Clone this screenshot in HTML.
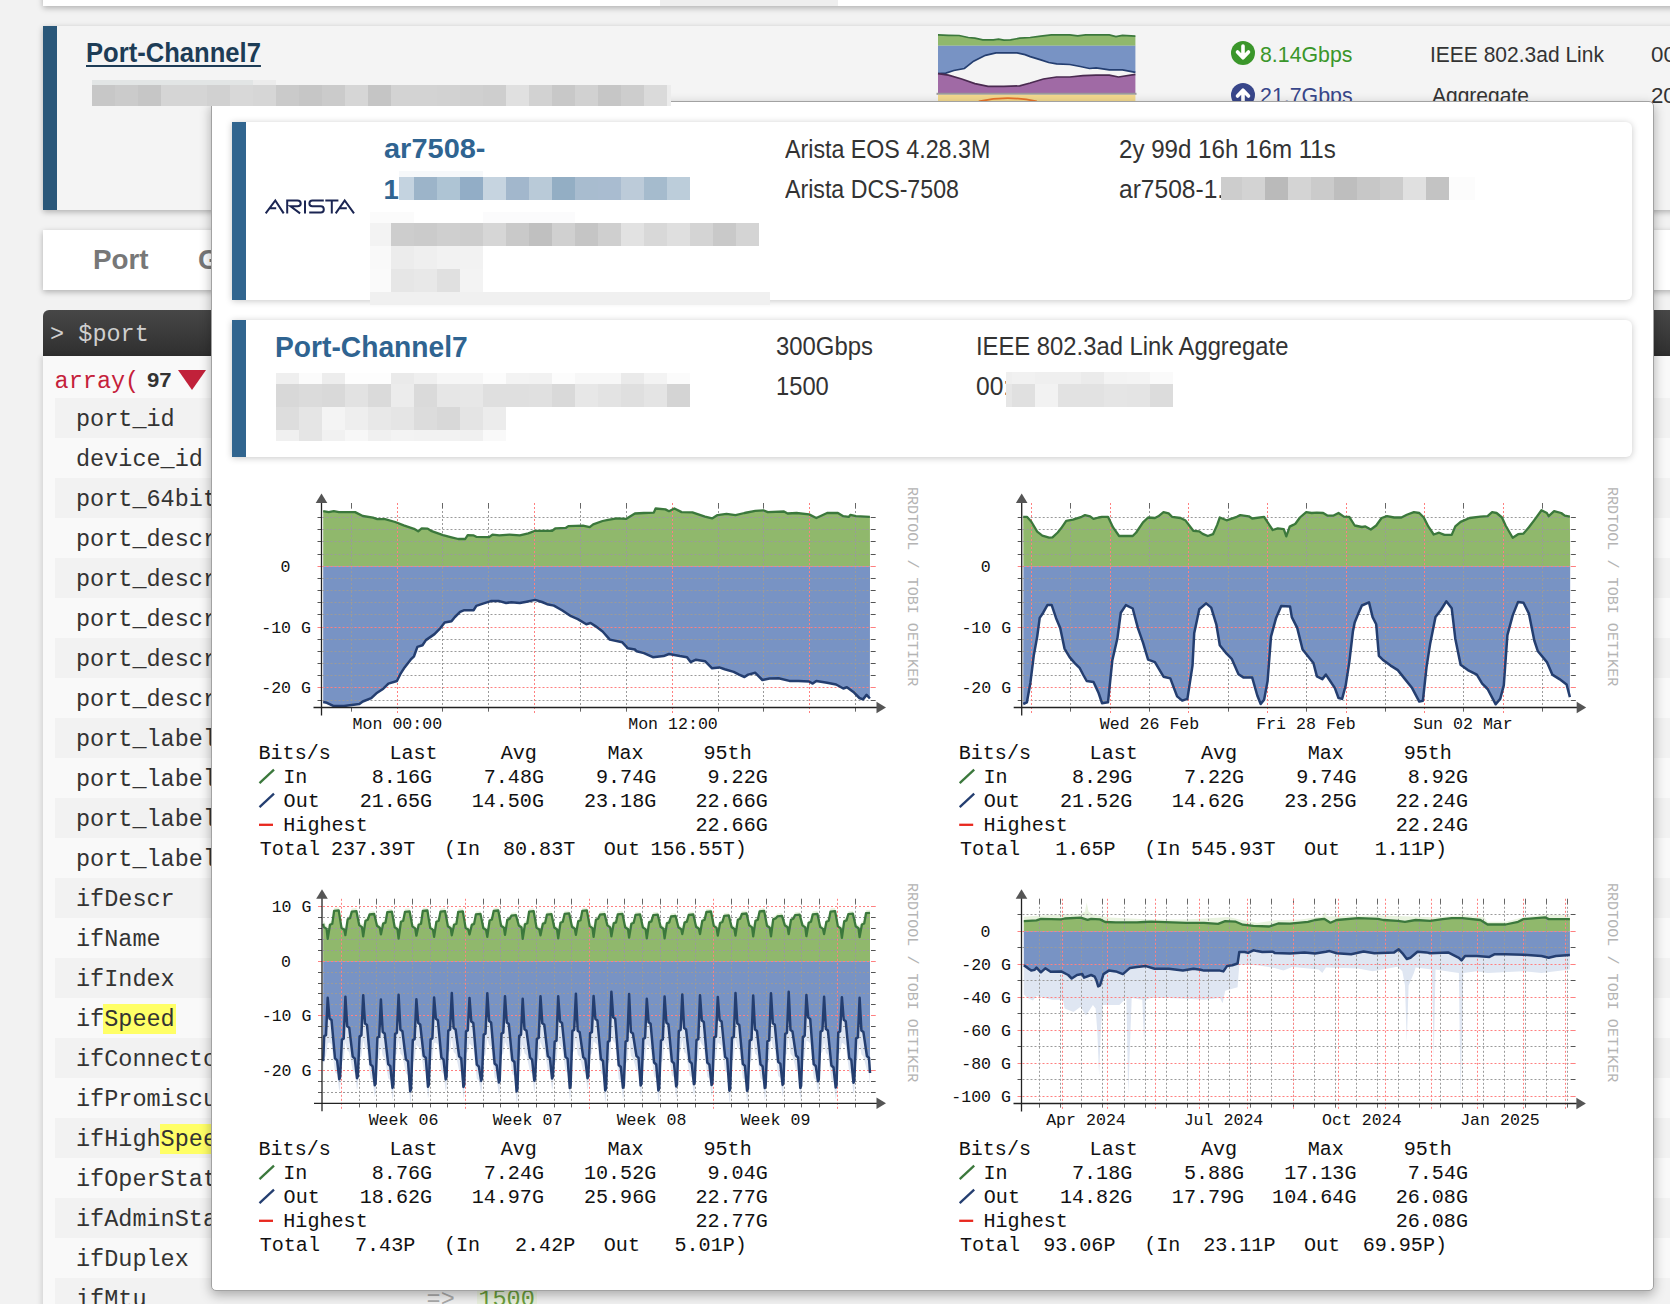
<!DOCTYPE html><html><head><meta charset="utf-8"><style>
html,body{margin:0;padding:0;background:#f2f2f2;}
body{width:1670px;height:1304px;overflow:hidden;position:relative;background:#f2f2f2;font-family:"Liberation Sans",sans-serif;}
.t{position:absolute;white-space:pre;line-height:1;}
.r{position:absolute;}
svg{position:absolute;overflow:visible;}
</style></head><body><div class="r" style="left:43px;top:-20px;width:1700px;height:26px;background:#fff;box-shadow:0 2px 6px rgba(0,0,0,.28);"></div>
<div class="r" style="left:660.0px;top:0.0px;width:178.0px;height:6.0px;background:#eeeeee;"></div>
<div class="r" style="left:43px;top:26px;width:1700px;height:184px;background:#f4f4f4;box-shadow:0 2px 6px rgba(0,0,0,.28);"></div>
<div class="r" style="left:43.0px;top:26.0px;width:14.0px;height:184.0px;background:#2a5779;"></div>
<div class="t" style="left:86.2px;top:40.0px;font-size:27px;font-family:'Liberation Sans', sans-serif;font-weight:bold;color:#1d3c56;transform:scaleX(0.9480);transform-origin:0 0;text-decoration:underline;text-underline-offset:3px;text-decoration-thickness:2px;">Port-Channel7</div>
<svg style="left:938px;top:33px" width="198" height="68" viewBox="0 0 198 68">
<path d="M0 12.8 L0.0 1.9 L10.5 2.3 L21.1 2.5 L30.3 4.5 L36.9 5.2 L44.8 6.8 L55.3 6.8 L60.6 6.2 L65.9 7.2 L72.5 6.8 L81.7 5.2 L92.2 4.5 L102.8 3.2 L113.3 1.9 L131.8 1.9 L139.7 2.8 L147.6 1.9 L171.3 1.9 L177.9 3.6 L184.5 2.3 L197.4 3.2 L197.4 12.8Z" fill="#90b86c"/>
<path d="M0.0 1.9 L10.5 2.3 L21.1 2.5 L30.3 4.5 L36.9 5.2 L44.8 6.8 L55.3 6.8 L60.6 6.2 L65.9 7.2 L72.5 6.8 L81.7 5.2 L92.2 4.5 L102.8 3.2 L113.3 1.9 L131.8 1.9 L139.7 2.8 L147.6 1.9 L171.3 1.9 L177.9 3.6 L184.5 2.3 L197.4 3.2" fill="none" stroke="#3b783c" stroke-width="1.7"/>
<path d="M0 12.8 L0.0 40.7 L7.9 40.1 L15.8 37.5 L26.4 35.5 L35.6 28.2 L47.4 22.3 L58.0 19.9 L79.1 19.9 L87.0 21.6 L92.2 23.6 L102.8 26.9 L110.7 29.5 L118.6 30.9 L131.8 31.5 L142.3 33.5 L151.5 35.5 L158.1 34.8 L171.3 36.8 L184.5 36.8 L197.4 39.4 L197.4 12.8Z" fill="#7893c4"/>
<path d="M0.0 40.7 L7.9 40.1 L15.8 37.5 L26.4 35.5 L35.6 28.2 L47.4 22.3 L58.0 19.9 L79.1 19.9 L87.0 21.6 L92.2 23.6 L102.8 26.9 L110.7 29.5 L118.6 30.9 L131.8 31.5 L142.3 33.5 L151.5 35.5 L158.1 34.8 L171.3 36.8 L184.5 36.8 L197.4 39.4" fill="none" stroke="#243e70" stroke-width="1.7"/>
<path d="M0 60.5 L0.0 40.7 L10.5 42.1 L23.7 46.0 L36.9 50.6 L50.1 53.3 L65.9 53.3 L81.7 52.9 L92.2 50.0 L105.4 46.0 L118.6 44.0 L131.8 44.0 L144.9 42.7 L158.1 42.1 L171.3 42.1 L180.5 44.0 L197.4 41.4 L197.4 60.5Z" fill="#a06aa5"/>
<path d="M0.0 40.7 L10.5 42.1 L23.7 46.0 L36.9 50.6 L50.1 53.3 L65.9 53.3 L81.7 52.9 L92.2 50.0 L105.4 46.0 L118.6 44.0 L131.8 44.0 L144.9 42.7 L158.1 42.1 L171.3 42.1 L180.5 44.0 L197.4 41.4" fill="none" stroke="#4a2a50" stroke-width="1.7"/>
<rect x="-1.5" y="59.8" width="200" height="2" fill="#9a9a9a"/>
<rect x="0" y="61.8" width="197.4" height="7" fill="#f3d98e"/>
<path d="M40.8 68.4 Q69.8 62 98.8 68.4" fill="none" stroke="#e8742a" stroke-width="1.8"/>
</svg>
<svg style="left:1231px;top:41px" width="24" height="24" viewBox="0 0 24 24"><circle cx="12" cy="12" r="12" fill="#3a962a"/><path d="M12 5 V16 M6.5 11 L12 16.8 L17.5 11" fill="none" stroke="#fff" stroke-width="3.6" stroke-linecap="round" stroke-linejoin="round"/></svg>
<div class="t" style="left:1260.1px;top:43.9px;font-size:22px;font-family:'Liberation Sans', sans-serif;font-weight:normal;color:#3a962a;transform:scaleX(0.9687);transform-origin:0 0;">8.14Gbps</div>
<svg style="left:1231px;top:83px" width="24" height="24" viewBox="0 0 24 24"><circle cx="12" cy="12" r="12" fill="#38468a"/><path d="M12 19 V8 M6.5 13 L12 7.2 L17.5 13" fill="none" stroke="#fff" stroke-width="3.6" stroke-linecap="round" stroke-linejoin="round"/></svg>
<div class="t" style="left:1259.9px;top:84.9px;font-size:22px;font-family:'Liberation Sans', sans-serif;font-weight:normal;color:#38468a;transform:scaleX(0.9710);transform-origin:0 0;">21.7Gbps</div>
<div class="t" style="left:1430.1px;top:43.6px;font-size:22.3px;font-family:'Liberation Sans', sans-serif;font-weight:normal;color:#333;transform:scaleX(0.9418);transform-origin:0 0;">IEEE 802.3ad Link</div>
<div class="t" style="left:1432.0px;top:84.6px;font-size:22.3px;font-family:'Liberation Sans', sans-serif;font-weight:normal;color:#333;transform:scaleX(0.9420);transform-origin:0 0;">Aggregate</div>
<div class="t" style="left:1651.1px;top:43.6px;font-size:22.3px;font-family:'Liberation Sans', sans-serif;font-weight:normal;color:#333;">00</div>
<div class="t" style="left:1650.9px;top:85.1px;font-size:22.3px;font-family:'Liberation Sans', sans-serif;font-weight:normal;color:#333;">20</div>
<div class="r" style="left:43px;top:230px;width:1700px;height:60px;background:#fff;box-shadow:0 2px 6px rgba(0,0,0,.28);"></div>
<div class="t" style="left:92.5px;top:244.8px;font-size:28.5px;font-family:'Liberation Sans', sans-serif;font-weight:bold;color:#777;transform:scaleX(0.9759);transform-origin:0 0;">Port</div>
<div class="t" style="left:198.4px;top:244.8px;font-size:28.5px;font-family:'Liberation Sans', sans-serif;font-weight:bold;color:#777;transform:scaleX(0.9747);transform-origin:0 0;">Graphs</div>
<div class="r" style="left:43px;top:310px;width:1700px;height:46px;background:linear-gradient(#474747,#2f2f2f);border-top-left-radius:6px;"></div>
<div class="t" style="left:50.1px;top:322.7px;font-size:23.5px;font-family:'Liberation Mono', monospace;font-weight:normal;color:#cfcfcf;">&gt; $port</div>
<div class="r" style="left:43px;top:356px;width:1700px;height:1000px;background:#f9f9f9;box-shadow:-2px 0 5px rgba(0,0,0,.12);"></div>
<div class="t" style="left:54.6px;top:369.5px;font-size:23.5px;font-family:'Liberation Mono', monospace;font-weight:normal;color:#c5213a;">array(</div>
<div class="t" style="left:147.3px;top:370.0px;font-size:20.5px;font-family:'Liberation Sans', sans-serif;font-weight:bold;color:#333;transform:scaleX(1.0788);transform-origin:0 0;">97</div>
<svg style="left:178px;top:370px" width="28" height="20"><path d="M0 0H28L14 20Z" fill="#c1213a"/></svg>
<div class="r" style="left:55.0px;top:398.0px;width:1645.0px;height:40.0px;background:#f2f2f2;"></div>
<div class="t" style="left:76px;top:407.9px;font-size:23.5px;font-family:'Liberation Mono',monospace;color:#333">port_id</div>
<div class="r" style="left:55.0px;top:438.0px;width:1645.0px;height:40.0px;background:#f9f9f9;"></div>
<div class="t" style="left:76px;top:447.9px;font-size:23.5px;font-family:'Liberation Mono',monospace;color:#333">device_id</div>
<div class="r" style="left:55.0px;top:478.0px;width:1645.0px;height:40.0px;background:#f2f2f2;"></div>
<div class="t" style="left:76px;top:487.9px;font-size:23.5px;font-family:'Liberation Mono',monospace;color:#333">port_64bit</div>
<div class="r" style="left:55.0px;top:518.0px;width:1645.0px;height:40.0px;background:#f9f9f9;"></div>
<div class="t" style="left:76px;top:527.9px;font-size:23.5px;font-family:'Liberation Mono',monospace;color:#333">port_descr_type</div>
<div class="r" style="left:55.0px;top:558.0px;width:1645.0px;height:40.0px;background:#f2f2f2;"></div>
<div class="t" style="left:76px;top:567.9px;font-size:23.5px;font-family:'Liberation Mono',monospace;color:#333">port_descr_descr</div>
<div class="r" style="left:55.0px;top:598.0px;width:1645.0px;height:40.0px;background:#f9f9f9;"></div>
<div class="t" style="left:76px;top:607.9px;font-size:23.5px;font-family:'Liberation Mono',monospace;color:#333">port_descr_circuit</div>
<div class="r" style="left:55.0px;top:638.0px;width:1645.0px;height:40.0px;background:#f2f2f2;"></div>
<div class="t" style="left:76px;top:647.9px;font-size:23.5px;font-family:'Liberation Mono',monospace;color:#333">port_descr_speed</div>
<div class="r" style="left:55.0px;top:678.0px;width:1645.0px;height:40.0px;background:#f9f9f9;"></div>
<div class="t" style="left:76px;top:687.9px;font-size:23.5px;font-family:'Liberation Mono',monospace;color:#333">port_descr_notes</div>
<div class="r" style="left:55.0px;top:718.0px;width:1645.0px;height:40.0px;background:#f2f2f2;"></div>
<div class="t" style="left:76px;top:727.9px;font-size:23.5px;font-family:'Liberation Mono',monospace;color:#333">port_label</div>
<div class="r" style="left:55.0px;top:758.0px;width:1645.0px;height:40.0px;background:#f9f9f9;"></div>
<div class="t" style="left:76px;top:767.9px;font-size:23.5px;font-family:'Liberation Mono',monospace;color:#333">port_label_base</div>
<div class="r" style="left:55.0px;top:798.0px;width:1645.0px;height:40.0px;background:#f2f2f2;"></div>
<div class="t" style="left:76px;top:807.9px;font-size:23.5px;font-family:'Liberation Mono',monospace;color:#333">port_label_num</div>
<div class="r" style="left:55.0px;top:838.0px;width:1645.0px;height:40.0px;background:#f9f9f9;"></div>
<div class="t" style="left:76px;top:847.9px;font-size:23.5px;font-family:'Liberation Mono',monospace;color:#333">port_label_short</div>
<div class="r" style="left:55.0px;top:878.0px;width:1645.0px;height:40.0px;background:#f2f2f2;"></div>
<div class="t" style="left:76px;top:887.9px;font-size:23.5px;font-family:'Liberation Mono',monospace;color:#333">ifDescr</div>
<div class="r" style="left:55.0px;top:918.0px;width:1645.0px;height:40.0px;background:#f9f9f9;"></div>
<div class="t" style="left:76px;top:927.9px;font-size:23.5px;font-family:'Liberation Mono',monospace;color:#333">ifName</div>
<div class="r" style="left:55.0px;top:958.0px;width:1645.0px;height:40.0px;background:#f2f2f2;"></div>
<div class="t" style="left:76px;top:967.9px;font-size:23.5px;font-family:'Liberation Mono',monospace;color:#333">ifIndex</div>
<div class="r" style="left:55.0px;top:998.0px;width:1645.0px;height:40.0px;background:#f9f9f9;"></div>
<div class="r" style="left:103.2px;top:1004.0px;width:72.5px;height:30.0px;background:#ffff66;"></div>
<div class="t" style="left:76px;top:1007.9px;font-size:23.5px;font-family:'Liberation Mono',monospace;color:#333">ifSpeed</div>
<div class="r" style="left:55.0px;top:1038.0px;width:1645.0px;height:40.0px;background:#f2f2f2;"></div>
<div class="t" style="left:76px;top:1047.9px;font-size:23.5px;font-family:'Liberation Mono',monospace;color:#333">ifConnectorPresent</div>
<div class="r" style="left:55.0px;top:1078.0px;width:1645.0px;height:40.0px;background:#f9f9f9;"></div>
<div class="t" style="left:76px;top:1087.9px;font-size:23.5px;font-family:'Liberation Mono',monospace;color:#333">ifPromiscuousMode</div>
<div class="r" style="left:55.0px;top:1118.0px;width:1645.0px;height:40.0px;background:#f2f2f2;"></div>
<div class="r" style="left:159.6px;top:1124.0px;width:72.5px;height:30.0px;background:#ffff66;"></div>
<div class="t" style="left:76px;top:1127.9px;font-size:23.5px;font-family:'Liberation Mono',monospace;color:#333">ifHighSpeed</div>
<div class="r" style="left:55.0px;top:1158.0px;width:1645.0px;height:40.0px;background:#f9f9f9;"></div>
<div class="t" style="left:76px;top:1167.9px;font-size:23.5px;font-family:'Liberation Mono',monospace;color:#333">ifOperStatus</div>
<div class="r" style="left:55.0px;top:1198.0px;width:1645.0px;height:40.0px;background:#f2f2f2;"></div>
<div class="t" style="left:76px;top:1207.9px;font-size:23.5px;font-family:'Liberation Mono',monospace;color:#333">ifAdminStatus</div>
<div class="r" style="left:55.0px;top:1238.0px;width:1645.0px;height:40.0px;background:#f9f9f9;"></div>
<div class="t" style="left:76px;top:1247.9px;font-size:23.5px;font-family:'Liberation Mono',monospace;color:#333">ifDuplex</div>
<div class="r" style="left:55.0px;top:1278.0px;width:1645.0px;height:40.0px;background:#f2f2f2;"></div>
<div class="t" style="left:76px;top:1287.9px;font-size:23.5px;font-family:'Liberation Mono',monospace;color:#333">ifMtu</div>
<div class="t" style="left:426.6px;top:1288.1px;font-size:23.5px;font-family:'Liberation Mono', monospace;font-weight:normal;color:#aaa;">=&gt;</div>
<div class="r" style="left:477.0px;top:1283.0px;width:60.0px;height:21.0px;background:#e9f0de;"></div>
<div class="t" style="left:478.4px;top:1288.1px;font-size:23.5px;font-family:'Liberation Mono', monospace;font-weight:normal;color:#6a9e3c;">1500</div>
<div class="r" style="left:211px;top:101px;width:1441px;height:1188px;background:#fff;border:1px solid #a2a2a2;border-radius:5px;box-shadow:0 4px 12px rgba(0,0,0,.3);"></div>
<div class="r" style="left:232px;top:122px;width:1400px;height:178px;background:#fff;border-radius:0 6px 6px 0;box-shadow:0 1px 7px rgba(0,0,0,.22);"></div>
<div class="r" style="left:232.0px;top:122.0px;width:14.0px;height:178.0px;background:#31658f;"></div>
<svg style="left:260px;top:190px" width="100" height="30" viewBox="0 0 100 30"><g fill="none" stroke="#1b2552" stroke-width="2" stroke-linejoin="miter">
<path d="M5.7 23.4 L15.3 10.4 L23.7 23.4 M9.9 18.2 H16.2"/>
<path d="M27.2 23.4 V10.6 H37.5 Q40.7 10.6 40.7 13.4 Q40.7 16.2 37.5 16.2 H30.5 L40.1 23.4"/>
<path d="M45 10.4 V23.4"/>
<path d="M63.8 10.6 H52.4 Q49.4 10.6 49.4 13.4 Q49.4 16.2 52.4 16.2 H60.8 Q63.8 16.2 63.8 19.6 Q63.8 22.6 60.8 22.6 H49.2"/>
<path d="M65.3 10.6 H78.4 M71.8 10.6 V23.4"/>
<path d="M75.7 23.4 L84.7 10.4 L94 23.4 M79.6 18.2 H86.8"/>
</g></svg>
<div class="t" style="left:383.7px;top:135.4px;font-size:27.5px;font-family:'Liberation Sans', sans-serif;font-weight:bold;color:#2f6491;transform:scaleX(1.0538);transform-origin:0 0;">ar7508-</div>
<div class="t" style="left:383.4px;top:175.9px;font-size:27.5px;font-family:'Liberation Sans', sans-serif;font-weight:bold;color:#2f6491;">1</div>
<div class="t" style="left:784.7px;top:136.9px;font-size:25.4px;font-family:'Liberation Sans', sans-serif;font-weight:normal;color:#333;transform:scaleX(0.9147);transform-origin:0 0;">Arista EOS 4.28.3M</div>
<div class="t" style="left:784.7px;top:176.7px;font-size:25.4px;font-family:'Liberation Sans', sans-serif;font-weight:normal;color:#333;transform:scaleX(0.9130);transform-origin:0 0;">Arista DCS-7508</div>
<div class="t" style="left:1118.8px;top:136.9px;font-size:25.4px;font-family:'Liberation Sans', sans-serif;font-weight:normal;color:#333;transform:scaleX(0.9500);transform-origin:0 0;">2y 99d 16h 16m 11s</div>
<div class="t" style="left:1119.0px;top:176.7px;font-size:25.4px;font-family:'Liberation Sans', sans-serif;font-weight:normal;color:#333;transform:scaleX(0.9677);transform-origin:0 0;">ar7508-1.</div>
<div class="r" style="left:232px;top:320px;width:1400px;height:137px;background:#fff;border-radius:0 6px 6px 0;box-shadow:0 1px 7px rgba(0,0,0,.22);"></div>
<div class="r" style="left:232.0px;top:320.0px;width:14.0px;height:137.0px;background:#31658f;"></div>
<div class="t" style="left:274.5px;top:331.5px;font-size:30px;font-family:'Liberation Sans', sans-serif;font-weight:bold;color:#2f6491;transform:scaleX(0.9400);transform-origin:0 0;">Port-Channel7</div>
<div class="t" style="left:775.9px;top:334.2px;font-size:25.5px;font-family:'Liberation Sans', sans-serif;font-weight:normal;color:#333;transform:scaleX(0.9367);transform-origin:0 0;">300Gbps</div>
<div class="t" style="left:775.9px;top:374.1px;font-size:25.5px;font-family:'Liberation Sans', sans-serif;font-weight:normal;color:#333;transform:scaleX(0.9304);transform-origin:0 0;">1500</div>
<div class="t" style="left:975.9px;top:334.2px;font-size:25.5px;font-family:'Liberation Sans', sans-serif;font-weight:normal;color:#333;transform:scaleX(0.9336);transform-origin:0 0;">IEEE 802.3ad Link Aggregate</div>
<div class="t" style="left:976.0px;top:374.1px;font-size:25.5px;font-family:'Liberation Sans', sans-serif;font-weight:normal;color:#333;transform:scaleX(0.9648);transform-origin:0 0;">00:</div>
<svg style="left:0;top:0" width="1670" height="1304" viewBox="0 0 1670 1304"><style>.ax{font-family:"Liberation Mono",monospace;font-size:16.6px;fill:#111}.lg{font-family:"Liberation Mono",monospace;font-size:20.1px;fill:#111;white-space:pre}.wm{font-family:"Liberation Mono",monospace;font-size:15.1px;fill:#b4b4b4}</style><path d="M323.2 566.3 L323.2 511.2 L328.7 512.1 L333.8 511.2 L338.9 512.1 L355.1 512.1 L362.8 516.0 L373.0 517.7 L377.3 519.2 L385.0 519.2 L395.2 522.0 L403.7 525.4 L414.0 528.8 L418.2 531.3 L421.7 528.3 L427.6 528.6 L431.0 530.8 L443.0 535.1 L451.5 537.3 L458.3 539.0 L465.2 539.0 L467.7 535.1 L473.7 535.4 L476.3 536.8 L489.1 537.2 L492.5 534.6 L499.3 535.4 L509.5 534.6 L519.8 535.4 L528.3 533.4 L535.1 530.8 L552.2 530.8 L555.6 528.3 L565.9 527.8 L568.4 526.1 L582.9 525.7 L589.7 527.1 L593.2 524.4 L602.6 521.0 L608.0 519.8 L616.9 518.4 L625.9 518.9 L634.9 513.5 L643.9 513.0 L653.8 512.6 L655.6 508.5 L665.4 509.4 L669.0 511.2 L674.4 508.5 L681.6 512.1 L692.4 512.4 L705.0 516.6 L712.1 518.4 L717.5 515.1 L726.5 513.9 L735.5 515.1 L744.5 513.0 L755.3 510.8 L763.3 510.3 L767.8 512.1 L784.0 511.5 L787.6 513.5 L796.6 513.0 L809.1 514.4 L816.3 518.0 L827.1 513.0 L837.9 513.0 L843.3 516.2 L848.7 516.9 L850.5 514.8 L855.9 516.2 L869.9 516.9 L870.0 566.3Z" fill="#90b86c"/>
<path d="M323.2 566.3 L323.2 702.0 L326.9 702.8 L333.8 706.1 L344.0 706.1 L359.4 704.0 L362.8 701.5 L371.3 698.1 L376.4 693.3 L383.3 688.7 L388.4 683.6 L396.9 681.0 L400.3 674.2 L404.6 667.4 L410.6 659.7 L414.0 656.3 L417.4 646.9 L422.5 645.2 L425.9 640.1 L434.5 634.1 L440.4 628.1 L444.7 622.6 L451.5 621.3 L454.9 617.0 L460.1 611.9 L464.3 610.2 L473.7 610.2 L476.3 605.9 L482.2 603.9 L490.8 601.1 L499.3 601.1 L506.1 603.0 L511.2 602.2 L519.8 603.0 L526.6 601.7 L535.1 599.9 L542.0 602.0 L547.1 604.2 L553.9 605.6 L562.4 610.5 L571.0 616.2 L577.8 619.1 L586.3 624.2 L590.6 623.0 L595.4 626.1 L602.6 631.5 L609.8 639.6 L622.3 642.3 L627.7 648.2 L634.9 649.5 L636.7 651.3 L643.9 653.1 L652.9 657.2 L663.6 656.1 L669.0 654.0 L679.8 656.1 L687.0 657.2 L690.6 662.1 L696.0 659.7 L705.0 661.2 L712.1 668.3 L719.3 667.4 L724.7 669.2 L733.7 671.9 L739.1 674.6 L744.5 677.0 L748.1 674.6 L755.3 672.8 L762.4 680.0 L769.6 678.6 L778.6 678.2 L789.4 680.9 L798.4 680.9 L809.1 681.5 L812.7 683.6 L816.3 680.9 L827.1 682.7 L836.1 684.5 L843.3 688.5 L846.9 687.2 L854.1 692.6 L859.4 698.0 L863.0 699.4 L866.6 694.9 L869.9 698.5 L870.0 566.3Z" fill="#7893c4"/>
<line x1="322.5" y1="517.5" x2="875.5" y2="517.5" stroke="#9a9a9a" stroke-width="1" stroke-dasharray="2 2"/>
<line x1="317.5" y1="517.5" x2="321.5" y2="517.5" stroke="#555" stroke-width="1"/>
<line x1="871" y1="517.5" x2="875.5" y2="517.5" stroke="#555" stroke-width="1"/>
<line x1="322.5" y1="529.5" x2="875.5" y2="529.5" stroke="#9a9a9a" stroke-width="1" stroke-dasharray="2 2"/>
<line x1="317.5" y1="529.5" x2="321.5" y2="529.5" stroke="#555" stroke-width="1"/>
<line x1="871" y1="529.5" x2="875.5" y2="529.5" stroke="#555" stroke-width="1"/>
<line x1="322.5" y1="541.5" x2="875.5" y2="541.5" stroke="#9a9a9a" stroke-width="1" stroke-dasharray="2 2"/>
<line x1="317.5" y1="541.5" x2="321.5" y2="541.5" stroke="#555" stroke-width="1"/>
<line x1="871" y1="541.5" x2="875.5" y2="541.5" stroke="#555" stroke-width="1"/>
<line x1="322.5" y1="554.5" x2="875.5" y2="554.5" stroke="#9a9a9a" stroke-width="1" stroke-dasharray="2 2"/>
<line x1="317.5" y1="554.5" x2="321.5" y2="554.5" stroke="#555" stroke-width="1"/>
<line x1="871" y1="554.5" x2="875.5" y2="554.5" stroke="#555" stroke-width="1"/>
<line x1="322.5" y1="566.5" x2="875.5" y2="566.5" stroke="#ff8080" stroke-width="1" stroke-dasharray="2 2"/>
<line x1="317.5" y1="566.5" x2="321.5" y2="566.5" stroke="#ff8080" stroke-width="1"/>
<line x1="871" y1="566.5" x2="875.5" y2="566.5" stroke="#ff8080" stroke-width="1"/>
<line x1="322.5" y1="578.5" x2="875.5" y2="578.5" stroke="#9a9a9a" stroke-width="1" stroke-dasharray="2 2"/>
<line x1="317.5" y1="578.5" x2="321.5" y2="578.5" stroke="#555" stroke-width="1"/>
<line x1="871" y1="578.5" x2="875.5" y2="578.5" stroke="#555" stroke-width="1"/>
<line x1="322.5" y1="590.5" x2="875.5" y2="590.5" stroke="#9a9a9a" stroke-width="1" stroke-dasharray="2 2"/>
<line x1="317.5" y1="590.5" x2="321.5" y2="590.5" stroke="#555" stroke-width="1"/>
<line x1="871" y1="590.5" x2="875.5" y2="590.5" stroke="#555" stroke-width="1"/>
<line x1="322.5" y1="602.5" x2="875.5" y2="602.5" stroke="#9a9a9a" stroke-width="1" stroke-dasharray="2 2"/>
<line x1="317.5" y1="602.5" x2="321.5" y2="602.5" stroke="#555" stroke-width="1"/>
<line x1="871" y1="602.5" x2="875.5" y2="602.5" stroke="#555" stroke-width="1"/>
<line x1="322.5" y1="614.5" x2="875.5" y2="614.5" stroke="#9a9a9a" stroke-width="1" stroke-dasharray="2 2"/>
<line x1="317.5" y1="614.5" x2="321.5" y2="614.5" stroke="#555" stroke-width="1"/>
<line x1="871" y1="614.5" x2="875.5" y2="614.5" stroke="#555" stroke-width="1"/>
<line x1="322.5" y1="627.5" x2="875.5" y2="627.5" stroke="#ff8080" stroke-width="1" stroke-dasharray="2 2"/>
<line x1="317.5" y1="627.5" x2="321.5" y2="627.5" stroke="#ff8080" stroke-width="1"/>
<line x1="871" y1="627.5" x2="875.5" y2="627.5" stroke="#ff8080" stroke-width="1"/>
<line x1="322.5" y1="639.5" x2="875.5" y2="639.5" stroke="#9a9a9a" stroke-width="1" stroke-dasharray="2 2"/>
<line x1="317.5" y1="639.5" x2="321.5" y2="639.5" stroke="#555" stroke-width="1"/>
<line x1="871" y1="639.5" x2="875.5" y2="639.5" stroke="#555" stroke-width="1"/>
<line x1="322.5" y1="651.5" x2="875.5" y2="651.5" stroke="#9a9a9a" stroke-width="1" stroke-dasharray="2 2"/>
<line x1="317.5" y1="651.5" x2="321.5" y2="651.5" stroke="#555" stroke-width="1"/>
<line x1="871" y1="651.5" x2="875.5" y2="651.5" stroke="#555" stroke-width="1"/>
<line x1="322.5" y1="663.5" x2="875.5" y2="663.5" stroke="#9a9a9a" stroke-width="1" stroke-dasharray="2 2"/>
<line x1="317.5" y1="663.5" x2="321.5" y2="663.5" stroke="#555" stroke-width="1"/>
<line x1="871" y1="663.5" x2="875.5" y2="663.5" stroke="#555" stroke-width="1"/>
<line x1="322.5" y1="675.5" x2="875.5" y2="675.5" stroke="#9a9a9a" stroke-width="1" stroke-dasharray="2 2"/>
<line x1="317.5" y1="675.5" x2="321.5" y2="675.5" stroke="#555" stroke-width="1"/>
<line x1="871" y1="675.5" x2="875.5" y2="675.5" stroke="#555" stroke-width="1"/>
<line x1="322.5" y1="687.5" x2="875.5" y2="687.5" stroke="#ff8080" stroke-width="1" stroke-dasharray="2 2"/>
<line x1="317.5" y1="687.5" x2="321.5" y2="687.5" stroke="#ff8080" stroke-width="1"/>
<line x1="871" y1="687.5" x2="875.5" y2="687.5" stroke="#ff8080" stroke-width="1"/>
<line x1="322.5" y1="700.5" x2="875.5" y2="700.5" stroke="#9a9a9a" stroke-width="1" stroke-dasharray="2 2"/>
<line x1="317.5" y1="700.5" x2="321.5" y2="700.5" stroke="#555" stroke-width="1"/>
<line x1="871" y1="700.5" x2="875.5" y2="700.5" stroke="#555" stroke-width="1"/>
<line x1="351.5" y1="503" x2="351.5" y2="711.5" stroke="#9a9a9a" stroke-width="1" stroke-dasharray="2 2"/>
<line x1="351.5" y1="503" x2="351.5" y2="508" stroke="#666" stroke-width="1"/>
<line x1="351.5" y1="707.5" x2="351.5" y2="711.5" stroke="#666" stroke-width="1"/>
<line x1="397.5" y1="503" x2="397.5" y2="713.5" stroke="#ff8080" stroke-width="1" stroke-dasharray="2 2"/>
<line x1="442.5" y1="503" x2="442.5" y2="711.5" stroke="#9a9a9a" stroke-width="1" stroke-dasharray="2 2"/>
<line x1="442.5" y1="503" x2="442.5" y2="508" stroke="#666" stroke-width="1"/>
<line x1="442.5" y1="707.5" x2="442.5" y2="711.5" stroke="#666" stroke-width="1"/>
<line x1="488.5" y1="503" x2="488.5" y2="711.5" stroke="#9a9a9a" stroke-width="1" stroke-dasharray="2 2"/>
<line x1="488.5" y1="503" x2="488.5" y2="508" stroke="#666" stroke-width="1"/>
<line x1="488.5" y1="707.5" x2="488.5" y2="711.5" stroke="#666" stroke-width="1"/>
<line x1="534.5" y1="503" x2="534.5" y2="713.5" stroke="#ff8080" stroke-width="1" stroke-dasharray="2 2"/>
<line x1="580.5" y1="503" x2="580.5" y2="711.5" stroke="#9a9a9a" stroke-width="1" stroke-dasharray="2 2"/>
<line x1="580.5" y1="503" x2="580.5" y2="508" stroke="#666" stroke-width="1"/>
<line x1="580.5" y1="707.5" x2="580.5" y2="711.5" stroke="#666" stroke-width="1"/>
<line x1="626.5" y1="503" x2="626.5" y2="711.5" stroke="#9a9a9a" stroke-width="1" stroke-dasharray="2 2"/>
<line x1="626.5" y1="503" x2="626.5" y2="508" stroke="#666" stroke-width="1"/>
<line x1="626.5" y1="707.5" x2="626.5" y2="711.5" stroke="#666" stroke-width="1"/>
<line x1="672.5" y1="503" x2="672.5" y2="713.5" stroke="#ff8080" stroke-width="1" stroke-dasharray="2 2"/>
<line x1="718.5" y1="503" x2="718.5" y2="711.5" stroke="#9a9a9a" stroke-width="1" stroke-dasharray="2 2"/>
<line x1="718.5" y1="503" x2="718.5" y2="508" stroke="#666" stroke-width="1"/>
<line x1="718.5" y1="707.5" x2="718.5" y2="711.5" stroke="#666" stroke-width="1"/>
<line x1="763.5" y1="503" x2="763.5" y2="711.5" stroke="#9a9a9a" stroke-width="1" stroke-dasharray="2 2"/>
<line x1="763.5" y1="503" x2="763.5" y2="508" stroke="#666" stroke-width="1"/>
<line x1="763.5" y1="707.5" x2="763.5" y2="711.5" stroke="#666" stroke-width="1"/>
<line x1="809.5" y1="503" x2="809.5" y2="713.5" stroke="#ff8080" stroke-width="1" stroke-dasharray="2 2"/>
<line x1="855.5" y1="503" x2="855.5" y2="711.5" stroke="#9a9a9a" stroke-width="1" stroke-dasharray="2 2"/>
<line x1="855.5" y1="503" x2="855.5" y2="508" stroke="#666" stroke-width="1"/>
<line x1="855.5" y1="707.5" x2="855.5" y2="711.5" stroke="#666" stroke-width="1"/>
<path d="M323.2 511.2 L328.7 512.1 L333.8 511.2 L338.9 512.1 L355.1 512.1 L362.8 516.0 L373.0 517.7 L377.3 519.2 L385.0 519.2 L395.2 522.0 L403.7 525.4 L414.0 528.8 L418.2 531.3 L421.7 528.3 L427.6 528.6 L431.0 530.8 L443.0 535.1 L451.5 537.3 L458.3 539.0 L465.2 539.0 L467.7 535.1 L473.7 535.4 L476.3 536.8 L489.1 537.2 L492.5 534.6 L499.3 535.4 L509.5 534.6 L519.8 535.4 L528.3 533.4 L535.1 530.8 L552.2 530.8 L555.6 528.3 L565.9 527.8 L568.4 526.1 L582.9 525.7 L589.7 527.1 L593.2 524.4 L602.6 521.0 L608.0 519.8 L616.9 518.4 L625.9 518.9 L634.9 513.5 L643.9 513.0 L653.8 512.6 L655.6 508.5 L665.4 509.4 L669.0 511.2 L674.4 508.5 L681.6 512.1 L692.4 512.4 L705.0 516.6 L712.1 518.4 L717.5 515.1 L726.5 513.9 L735.5 515.1 L744.5 513.0 L755.3 510.8 L763.3 510.3 L767.8 512.1 L784.0 511.5 L787.6 513.5 L796.6 513.0 L809.1 514.4 L816.3 518.0 L827.1 513.0 L837.9 513.0 L843.3 516.2 L848.7 516.9 L850.5 514.8 L855.9 516.2 L869.9 516.9" fill="none" stroke="#3b783c" stroke-width="2.3" stroke-linejoin="round"/>
<path d="M323.2 702.0 L326.9 702.8 L333.8 706.1 L344.0 706.1 L359.4 704.0 L362.8 701.5 L371.3 698.1 L376.4 693.3 L383.3 688.7 L388.4 683.6 L396.9 681.0 L400.3 674.2 L404.6 667.4 L410.6 659.7 L414.0 656.3 L417.4 646.9 L422.5 645.2 L425.9 640.1 L434.5 634.1 L440.4 628.1 L444.7 622.6 L451.5 621.3 L454.9 617.0 L460.1 611.9 L464.3 610.2 L473.7 610.2 L476.3 605.9 L482.2 603.9 L490.8 601.1 L499.3 601.1 L506.1 603.0 L511.2 602.2 L519.8 603.0 L526.6 601.7 L535.1 599.9 L542.0 602.0 L547.1 604.2 L553.9 605.6 L562.4 610.5 L571.0 616.2 L577.8 619.1 L586.3 624.2 L590.6 623.0 L595.4 626.1 L602.6 631.5 L609.8 639.6 L622.3 642.3 L627.7 648.2 L634.9 649.5 L636.7 651.3 L643.9 653.1 L652.9 657.2 L663.6 656.1 L669.0 654.0 L679.8 656.1 L687.0 657.2 L690.6 662.1 L696.0 659.7 L705.0 661.2 L712.1 668.3 L719.3 667.4 L724.7 669.2 L733.7 671.9 L739.1 674.6 L744.5 677.0 L748.1 674.6 L755.3 672.8 L762.4 680.0 L769.6 678.6 L778.6 678.2 L789.4 680.9 L798.4 680.9 L809.1 681.5 L812.7 683.6 L816.3 680.9 L827.1 682.7 L836.1 684.5 L843.3 688.5 L846.9 687.2 L854.1 692.6 L859.4 698.0 L863.0 699.4 L866.6 694.9 L869.9 698.5" fill="none" stroke="#243e70" stroke-width="2.5" stroke-linejoin="round"/>
<line x1="321.5" y1="502" x2="321.5" y2="715.5" stroke="#222" stroke-width="1.3"/>
<line x1="313.5" y1="707.5" x2="877" y2="707.5" stroke="#222" stroke-width="1.3"/>
<path d="M315.7 503 L321.5 493.5 L327.3 503Z" fill="#555"/>
<path d="M876.5 701.7 L886 707.5 L876.5 713.3Z" fill="#555"/>
<text x="290.5" y="571.8" text-anchor="end" class="ax">0</text>
<text x="311.0" y="632.6" text-anchor="end" class="ax">-10 G</text>
<text x="311.0" y="693.4" text-anchor="end" class="ax">-20 G</text>
<text x="397.4" y="729.0" text-anchor="middle" class="ax">Mon 00:00</text>
<text x="673.0" y="729.0" text-anchor="middle" class="ax">Mon 12:00</text>
<text transform="translate(908 487) rotate(90)" class="wm">RRDTOOL / TOBI OETIKER</text>
<text x="258.5" y="758.7" class="lg" text-anchor="start">Bits/s</text>
<text x="389.4" y="758.7" class="lg" text-anchor="start">Last</text>
<text x="500.7" y="758.7" class="lg" text-anchor="start">Avg</text>
<text x="607.5" y="758.7" class="lg" text-anchor="start">Max</text>
<text x="703.5" y="758.7" class="lg" text-anchor="start">95th</text>
<text x="283.2" y="782.7" class="lg" text-anchor="start">In</text>
<text x="283.6" y="806.7" class="lg" text-anchor="start">Out</text>
<text x="283.3" y="830.5" class="lg" text-anchor="start">Highest</text>
<text x="432.1" y="782.7" class="lg" text-anchor="end">8.16G</text>
<text x="544.0" y="782.7" class="lg" text-anchor="end">7.48G</text>
<text x="656.3" y="782.7" class="lg" text-anchor="end">9.74G</text>
<text x="767.8" y="782.7" class="lg" text-anchor="end">9.22G</text>
<text x="432.1" y="806.7" class="lg" text-anchor="end">21.65G</text>
<text x="544.0" y="806.7" class="lg" text-anchor="end">14.50G</text>
<text x="656.3" y="806.7" class="lg" text-anchor="end">23.18G</text>
<text x="767.8" y="806.7" class="lg" text-anchor="end">22.66G</text>
<text x="767.8" y="830.5" class="lg" text-anchor="end">22.66G</text>
<text x="259.7" y="854.6" class="lg" text-anchor="start">Total</text>
<text x="415.3" y="854.6" class="lg" text-anchor="end">237.39T</text>
<text x="444.0" y="854.6" class="lg" text-anchor="start">(In</text>
<text x="575.3" y="854.6" class="lg" text-anchor="end">80.83T</text>
<text x="603.8" y="854.6" class="lg" text-anchor="start">Out</text>
<text x="734.8" y="854.6" class="lg" text-anchor="end">156.55T</text>
<text x="734.8" y="854.6" class="lg" text-anchor="start">)</text>
<line x1="259.5" y1="783.2" x2="274" y2="769.7" stroke="#3b783c" stroke-width="2.3"/>
<line x1="259.5" y1="807.2" x2="274" y2="793.7" stroke="#243e70" stroke-width="2.3"/>
<line x1="259" y1="824.8" x2="273" y2="824.8" stroke="#e8281e" stroke-width="2.3"/>
<path d="M1023.4 566.3 L1023.2 516.8 L1026.9 516.8 L1031.2 521.5 L1037.2 531.7 L1042.3 535.6 L1049.1 537.7 L1052.5 537.3 L1057.7 532.5 L1061.1 528.3 L1066.2 520.9 L1073.0 519.7 L1081.6 516.8 L1085.0 515.1 L1090.1 516.3 L1093.5 518.9 L1098.6 517.5 L1102.0 516.8 L1108.0 516.8 L1113.1 527.4 L1119.1 536.0 L1124.2 536.0 L1132.7 536.0 L1136.2 532.5 L1143.0 522.3 L1148.1 517.5 L1154.9 518.0 L1158.3 516.3 L1163.5 512.1 L1168.6 513.4 L1172.0 516.8 L1180.5 518.0 L1185.6 520.6 L1193.3 530.8 L1199.3 531.3 L1202.7 533.9 L1207.8 536.0 L1213.0 534.2 L1217.2 524.9 L1219.8 517.5 L1226.6 520.3 L1236.8 516.8 L1240.3 515.1 L1248.8 516.3 L1252.2 518.5 L1264.1 516.8 L1269.3 524.9 L1272.7 530.0 L1277.8 528.3 L1283.8 529.1 L1286.3 536.3 L1289.7 526.6 L1293.2 524.9 L1295.4 523.7 L1299.9 517.5 L1306.2 512.1 L1311.6 513.0 L1316.9 512.6 L1323.2 513.0 L1327.7 515.7 L1333.1 515.7 L1338.5 513.0 L1343.9 516.6 L1349.3 516.9 L1354.7 525.5 L1361.9 527.0 L1365.4 526.4 L1370.8 529.5 L1376.2 525.5 L1381.6 518.0 L1387.0 516.2 L1394.2 517.5 L1401.4 517.5 L1406.8 514.8 L1413.9 512.1 L1419.3 513.0 L1423.8 517.5 L1428.3 526.4 L1433.7 534.5 L1439.1 532.7 L1444.5 534.9 L1451.7 534.9 L1455.3 526.4 L1460.6 521.9 L1469.6 518.0 L1480.4 516.6 L1487.6 516.2 L1492.1 512.1 L1496.6 513.0 L1502.0 517.5 L1505.6 525.5 L1512.7 537.8 L1518.1 534.2 L1523.5 533.6 L1528.9 527.3 L1534.3 520.1 L1541.5 510.3 L1546.9 513.0 L1548.7 516.2 L1554.1 511.2 L1561.2 513.0 L1564.8 515.7 L1569.9 516.6 L1570.2 566.3Z" fill="#90b86c"/>
<path d="M1023.4 566.3 L1023.2 704.0 L1026.9 702.3 L1030.4 682.7 L1033.8 655.4 L1037.2 636.6 L1039.7 617.9 L1043.2 612.7 L1047.4 605.1 L1051.7 605.1 L1056.0 617.9 L1060.2 628.1 L1064.5 648.6 L1069.6 657.1 L1074.7 663.1 L1079.8 668.2 L1083.3 675.0 L1086.7 681.0 L1093.5 681.9 L1098.6 693.0 L1102.0 703.2 L1108.0 702.3 L1112.3 660.5 L1117.4 638.3 L1120.8 612.7 L1125.9 605.1 L1132.7 608.5 L1137.9 628.1 L1143.0 642.6 L1148.1 659.7 L1154.9 662.2 L1163.5 676.7 L1170.3 678.4 L1177.1 696.4 L1182.2 700.6 L1187.4 698.9 L1192.5 665.6 L1194.2 633.2 L1199.3 609.3 L1206.1 603.4 L1211.2 607.6 L1216.4 624.7 L1219.8 645.2 L1226.6 653.7 L1231.7 658.8 L1238.5 674.2 L1243.7 677.6 L1252.2 677.6 L1257.3 695.5 L1260.7 704.0 L1264.1 699.8 L1267.6 681.0 L1271.0 636.6 L1276.1 617.9 L1281.2 605.9 L1290.0 606.4 L1291.8 617.1 L1297.2 627.9 L1302.6 649.5 L1306.2 654.0 L1313.4 663.0 L1316.9 676.4 L1322.3 679.1 L1325.9 674.6 L1329.5 680.0 L1334.9 688.1 L1338.5 698.0 L1342.1 698.9 L1345.7 685.4 L1349.3 662.1 L1352.9 631.5 L1354.7 622.5 L1358.3 613.6 L1361.9 605.5 L1369.0 602.4 L1372.6 617.1 L1376.2 624.3 L1378.9 655.8 L1383.4 660.3 L1390.6 665.6 L1397.8 670.1 L1405.0 679.1 L1412.1 688.1 L1419.3 701.6 L1422.9 700.7 L1426.5 667.4 L1430.1 644.1 L1435.5 617.1 L1440.9 610.0 L1446.3 601.3 L1451.7 608.2 L1455.3 638.7 L1460.6 664.8 L1467.8 670.1 L1476.8 674.6 L1482.2 683.6 L1487.6 689.0 L1495.7 704.3 L1500.2 698.9 L1503.8 685.4 L1507.4 635.1 L1512.7 615.4 L1518.1 601.9 L1523.5 602.8 L1528.9 613.6 L1534.3 640.5 L1537.9 651.3 L1546.9 662.1 L1552.3 674.6 L1559.4 679.1 L1566.6 684.5 L1569.9 697.1 L1570.2 566.3Z" fill="#7893c4"/>
<line x1="1022.7" y1="517.5" x2="1575.7" y2="517.5" stroke="#9a9a9a" stroke-width="1" stroke-dasharray="2 2"/>
<line x1="1017.7" y1="517.5" x2="1021.7" y2="517.5" stroke="#555" stroke-width="1"/>
<line x1="1571.2" y1="517.5" x2="1575.7" y2="517.5" stroke="#555" stroke-width="1"/>
<line x1="1022.7" y1="529.5" x2="1575.7" y2="529.5" stroke="#9a9a9a" stroke-width="1" stroke-dasharray="2 2"/>
<line x1="1017.7" y1="529.5" x2="1021.7" y2="529.5" stroke="#555" stroke-width="1"/>
<line x1="1571.2" y1="529.5" x2="1575.7" y2="529.5" stroke="#555" stroke-width="1"/>
<line x1="1022.7" y1="541.5" x2="1575.7" y2="541.5" stroke="#9a9a9a" stroke-width="1" stroke-dasharray="2 2"/>
<line x1="1017.7" y1="541.5" x2="1021.7" y2="541.5" stroke="#555" stroke-width="1"/>
<line x1="1571.2" y1="541.5" x2="1575.7" y2="541.5" stroke="#555" stroke-width="1"/>
<line x1="1022.7" y1="554.5" x2="1575.7" y2="554.5" stroke="#9a9a9a" stroke-width="1" stroke-dasharray="2 2"/>
<line x1="1017.7" y1="554.5" x2="1021.7" y2="554.5" stroke="#555" stroke-width="1"/>
<line x1="1571.2" y1="554.5" x2="1575.7" y2="554.5" stroke="#555" stroke-width="1"/>
<line x1="1022.7" y1="566.5" x2="1575.7" y2="566.5" stroke="#ff8080" stroke-width="1" stroke-dasharray="2 2"/>
<line x1="1017.7" y1="566.5" x2="1021.7" y2="566.5" stroke="#ff8080" stroke-width="1"/>
<line x1="1571.2" y1="566.5" x2="1575.7" y2="566.5" stroke="#ff8080" stroke-width="1"/>
<line x1="1022.7" y1="578.5" x2="1575.7" y2="578.5" stroke="#9a9a9a" stroke-width="1" stroke-dasharray="2 2"/>
<line x1="1017.7" y1="578.5" x2="1021.7" y2="578.5" stroke="#555" stroke-width="1"/>
<line x1="1571.2" y1="578.5" x2="1575.7" y2="578.5" stroke="#555" stroke-width="1"/>
<line x1="1022.7" y1="590.5" x2="1575.7" y2="590.5" stroke="#9a9a9a" stroke-width="1" stroke-dasharray="2 2"/>
<line x1="1017.7" y1="590.5" x2="1021.7" y2="590.5" stroke="#555" stroke-width="1"/>
<line x1="1571.2" y1="590.5" x2="1575.7" y2="590.5" stroke="#555" stroke-width="1"/>
<line x1="1022.7" y1="602.5" x2="1575.7" y2="602.5" stroke="#9a9a9a" stroke-width="1" stroke-dasharray="2 2"/>
<line x1="1017.7" y1="602.5" x2="1021.7" y2="602.5" stroke="#555" stroke-width="1"/>
<line x1="1571.2" y1="602.5" x2="1575.7" y2="602.5" stroke="#555" stroke-width="1"/>
<line x1="1022.7" y1="614.5" x2="1575.7" y2="614.5" stroke="#9a9a9a" stroke-width="1" stroke-dasharray="2 2"/>
<line x1="1017.7" y1="614.5" x2="1021.7" y2="614.5" stroke="#555" stroke-width="1"/>
<line x1="1571.2" y1="614.5" x2="1575.7" y2="614.5" stroke="#555" stroke-width="1"/>
<line x1="1022.7" y1="627.5" x2="1575.7" y2="627.5" stroke="#ff8080" stroke-width="1" stroke-dasharray="2 2"/>
<line x1="1017.7" y1="627.5" x2="1021.7" y2="627.5" stroke="#ff8080" stroke-width="1"/>
<line x1="1571.2" y1="627.5" x2="1575.7" y2="627.5" stroke="#ff8080" stroke-width="1"/>
<line x1="1022.7" y1="639.5" x2="1575.7" y2="639.5" stroke="#9a9a9a" stroke-width="1" stroke-dasharray="2 2"/>
<line x1="1017.7" y1="639.5" x2="1021.7" y2="639.5" stroke="#555" stroke-width="1"/>
<line x1="1571.2" y1="639.5" x2="1575.7" y2="639.5" stroke="#555" stroke-width="1"/>
<line x1="1022.7" y1="651.5" x2="1575.7" y2="651.5" stroke="#9a9a9a" stroke-width="1" stroke-dasharray="2 2"/>
<line x1="1017.7" y1="651.5" x2="1021.7" y2="651.5" stroke="#555" stroke-width="1"/>
<line x1="1571.2" y1="651.5" x2="1575.7" y2="651.5" stroke="#555" stroke-width="1"/>
<line x1="1022.7" y1="663.5" x2="1575.7" y2="663.5" stroke="#9a9a9a" stroke-width="1" stroke-dasharray="2 2"/>
<line x1="1017.7" y1="663.5" x2="1021.7" y2="663.5" stroke="#555" stroke-width="1"/>
<line x1="1571.2" y1="663.5" x2="1575.7" y2="663.5" stroke="#555" stroke-width="1"/>
<line x1="1022.7" y1="675.5" x2="1575.7" y2="675.5" stroke="#9a9a9a" stroke-width="1" stroke-dasharray="2 2"/>
<line x1="1017.7" y1="675.5" x2="1021.7" y2="675.5" stroke="#555" stroke-width="1"/>
<line x1="1571.2" y1="675.5" x2="1575.7" y2="675.5" stroke="#555" stroke-width="1"/>
<line x1="1022.7" y1="687.5" x2="1575.7" y2="687.5" stroke="#ff8080" stroke-width="1" stroke-dasharray="2 2"/>
<line x1="1017.7" y1="687.5" x2="1021.7" y2="687.5" stroke="#ff8080" stroke-width="1"/>
<line x1="1571.2" y1="687.5" x2="1575.7" y2="687.5" stroke="#ff8080" stroke-width="1"/>
<line x1="1022.7" y1="700.5" x2="1575.7" y2="700.5" stroke="#9a9a9a" stroke-width="1" stroke-dasharray="2 2"/>
<line x1="1017.7" y1="700.5" x2="1021.7" y2="700.5" stroke="#555" stroke-width="1"/>
<line x1="1571.2" y1="700.5" x2="1575.7" y2="700.5" stroke="#555" stroke-width="1"/>
<line x1="1031.5" y1="503" x2="1031.5" y2="713.5" stroke="#ff8080" stroke-width="1" stroke-dasharray="2 2"/>
<line x1="1070.5" y1="503" x2="1070.5" y2="711.5" stroke="#9a9a9a" stroke-width="1" stroke-dasharray="2 2"/>
<line x1="1070.5" y1="503" x2="1070.5" y2="508" stroke="#666" stroke-width="1"/>
<line x1="1070.5" y1="707.5" x2="1070.5" y2="711.5" stroke="#666" stroke-width="1"/>
<line x1="1110.5" y1="503" x2="1110.5" y2="713.5" stroke="#ff8080" stroke-width="1" stroke-dasharray="2 2"/>
<line x1="1149.5" y1="503" x2="1149.5" y2="711.5" stroke="#9a9a9a" stroke-width="1" stroke-dasharray="2 2"/>
<line x1="1149.5" y1="503" x2="1149.5" y2="508" stroke="#666" stroke-width="1"/>
<line x1="1149.5" y1="707.5" x2="1149.5" y2="711.5" stroke="#666" stroke-width="1"/>
<line x1="1188.5" y1="503" x2="1188.5" y2="713.5" stroke="#ff8080" stroke-width="1" stroke-dasharray="2 2"/>
<line x1="1228.5" y1="503" x2="1228.5" y2="711.5" stroke="#9a9a9a" stroke-width="1" stroke-dasharray="2 2"/>
<line x1="1228.5" y1="503" x2="1228.5" y2="508" stroke="#666" stroke-width="1"/>
<line x1="1228.5" y1="707.5" x2="1228.5" y2="711.5" stroke="#666" stroke-width="1"/>
<line x1="1267.5" y1="503" x2="1267.5" y2="713.5" stroke="#ff8080" stroke-width="1" stroke-dasharray="2 2"/>
<line x1="1306.5" y1="503" x2="1306.5" y2="711.5" stroke="#9a9a9a" stroke-width="1" stroke-dasharray="2 2"/>
<line x1="1306.5" y1="503" x2="1306.5" y2="508" stroke="#666" stroke-width="1"/>
<line x1="1306.5" y1="707.5" x2="1306.5" y2="711.5" stroke="#666" stroke-width="1"/>
<line x1="1346.5" y1="503" x2="1346.5" y2="713.5" stroke="#ff8080" stroke-width="1" stroke-dasharray="2 2"/>
<line x1="1385.5" y1="503" x2="1385.5" y2="711.5" stroke="#9a9a9a" stroke-width="1" stroke-dasharray="2 2"/>
<line x1="1385.5" y1="503" x2="1385.5" y2="508" stroke="#666" stroke-width="1"/>
<line x1="1385.5" y1="707.5" x2="1385.5" y2="711.5" stroke="#666" stroke-width="1"/>
<line x1="1424.5" y1="503" x2="1424.5" y2="713.5" stroke="#ff8080" stroke-width="1" stroke-dasharray="2 2"/>
<line x1="1463.5" y1="503" x2="1463.5" y2="711.5" stroke="#9a9a9a" stroke-width="1" stroke-dasharray="2 2"/>
<line x1="1463.5" y1="503" x2="1463.5" y2="508" stroke="#666" stroke-width="1"/>
<line x1="1463.5" y1="707.5" x2="1463.5" y2="711.5" stroke="#666" stroke-width="1"/>
<line x1="1503.5" y1="503" x2="1503.5" y2="713.5" stroke="#ff8080" stroke-width="1" stroke-dasharray="2 2"/>
<line x1="1542.5" y1="503" x2="1542.5" y2="711.5" stroke="#9a9a9a" stroke-width="1" stroke-dasharray="2 2"/>
<line x1="1542.5" y1="503" x2="1542.5" y2="508" stroke="#666" stroke-width="1"/>
<line x1="1542.5" y1="707.5" x2="1542.5" y2="711.5" stroke="#666" stroke-width="1"/>
<path d="M1023.2 516.8 L1026.9 516.8 L1031.2 521.5 L1037.2 531.7 L1042.3 535.6 L1049.1 537.7 L1052.5 537.3 L1057.7 532.5 L1061.1 528.3 L1066.2 520.9 L1073.0 519.7 L1081.6 516.8 L1085.0 515.1 L1090.1 516.3 L1093.5 518.9 L1098.6 517.5 L1102.0 516.8 L1108.0 516.8 L1113.1 527.4 L1119.1 536.0 L1124.2 536.0 L1132.7 536.0 L1136.2 532.5 L1143.0 522.3 L1148.1 517.5 L1154.9 518.0 L1158.3 516.3 L1163.5 512.1 L1168.6 513.4 L1172.0 516.8 L1180.5 518.0 L1185.6 520.6 L1193.3 530.8 L1199.3 531.3 L1202.7 533.9 L1207.8 536.0 L1213.0 534.2 L1217.2 524.9 L1219.8 517.5 L1226.6 520.3 L1236.8 516.8 L1240.3 515.1 L1248.8 516.3 L1252.2 518.5 L1264.1 516.8 L1269.3 524.9 L1272.7 530.0 L1277.8 528.3 L1283.8 529.1 L1286.3 536.3 L1289.7 526.6 L1293.2 524.9 L1295.4 523.7 L1299.9 517.5 L1306.2 512.1 L1311.6 513.0 L1316.9 512.6 L1323.2 513.0 L1327.7 515.7 L1333.1 515.7 L1338.5 513.0 L1343.9 516.6 L1349.3 516.9 L1354.7 525.5 L1361.9 527.0 L1365.4 526.4 L1370.8 529.5 L1376.2 525.5 L1381.6 518.0 L1387.0 516.2 L1394.2 517.5 L1401.4 517.5 L1406.8 514.8 L1413.9 512.1 L1419.3 513.0 L1423.8 517.5 L1428.3 526.4 L1433.7 534.5 L1439.1 532.7 L1444.5 534.9 L1451.7 534.9 L1455.3 526.4 L1460.6 521.9 L1469.6 518.0 L1480.4 516.6 L1487.6 516.2 L1492.1 512.1 L1496.6 513.0 L1502.0 517.5 L1505.6 525.5 L1512.7 537.8 L1518.1 534.2 L1523.5 533.6 L1528.9 527.3 L1534.3 520.1 L1541.5 510.3 L1546.9 513.0 L1548.7 516.2 L1554.1 511.2 L1561.2 513.0 L1564.8 515.7 L1569.9 516.6" fill="none" stroke="#3b783c" stroke-width="2.3" stroke-linejoin="round"/>
<path d="M1023.2 704.0 L1026.9 702.3 L1030.4 682.7 L1033.8 655.4 L1037.2 636.6 L1039.7 617.9 L1043.2 612.7 L1047.4 605.1 L1051.7 605.1 L1056.0 617.9 L1060.2 628.1 L1064.5 648.6 L1069.6 657.1 L1074.7 663.1 L1079.8 668.2 L1083.3 675.0 L1086.7 681.0 L1093.5 681.9 L1098.6 693.0 L1102.0 703.2 L1108.0 702.3 L1112.3 660.5 L1117.4 638.3 L1120.8 612.7 L1125.9 605.1 L1132.7 608.5 L1137.9 628.1 L1143.0 642.6 L1148.1 659.7 L1154.9 662.2 L1163.5 676.7 L1170.3 678.4 L1177.1 696.4 L1182.2 700.6 L1187.4 698.9 L1192.5 665.6 L1194.2 633.2 L1199.3 609.3 L1206.1 603.4 L1211.2 607.6 L1216.4 624.7 L1219.8 645.2 L1226.6 653.7 L1231.7 658.8 L1238.5 674.2 L1243.7 677.6 L1252.2 677.6 L1257.3 695.5 L1260.7 704.0 L1264.1 699.8 L1267.6 681.0 L1271.0 636.6 L1276.1 617.9 L1281.2 605.9 L1290.0 606.4 L1291.8 617.1 L1297.2 627.9 L1302.6 649.5 L1306.2 654.0 L1313.4 663.0 L1316.9 676.4 L1322.3 679.1 L1325.9 674.6 L1329.5 680.0 L1334.9 688.1 L1338.5 698.0 L1342.1 698.9 L1345.7 685.4 L1349.3 662.1 L1352.9 631.5 L1354.7 622.5 L1358.3 613.6 L1361.9 605.5 L1369.0 602.4 L1372.6 617.1 L1376.2 624.3 L1378.9 655.8 L1383.4 660.3 L1390.6 665.6 L1397.8 670.1 L1405.0 679.1 L1412.1 688.1 L1419.3 701.6 L1422.9 700.7 L1426.5 667.4 L1430.1 644.1 L1435.5 617.1 L1440.9 610.0 L1446.3 601.3 L1451.7 608.2 L1455.3 638.7 L1460.6 664.8 L1467.8 670.1 L1476.8 674.6 L1482.2 683.6 L1487.6 689.0 L1495.7 704.3 L1500.2 698.9 L1503.8 685.4 L1507.4 635.1 L1512.7 615.4 L1518.1 601.9 L1523.5 602.8 L1528.9 613.6 L1534.3 640.5 L1537.9 651.3 L1546.9 662.1 L1552.3 674.6 L1559.4 679.1 L1566.6 684.5 L1569.9 697.1" fill="none" stroke="#243e70" stroke-width="2.5" stroke-linejoin="round"/>
<line x1="1021.7" y1="502" x2="1021.7" y2="715.5" stroke="#222" stroke-width="1.3"/>
<line x1="1013.7" y1="707.5" x2="1577.2" y2="707.5" stroke="#222" stroke-width="1.3"/>
<path d="M1015.9000000000001 503 L1021.7 493.5 L1027.5 503Z" fill="#555"/>
<path d="M1576.7 701.7 L1586.2 707.5 L1576.7 713.3Z" fill="#555"/>
<text x="990.7" y="571.8" text-anchor="end" class="ax">0</text>
<text x="1011.2" y="632.6" text-anchor="end" class="ax">-10 G</text>
<text x="1011.2" y="693.4" text-anchor="end" class="ax">-20 G</text>
<text x="1149.5" y="729.0" text-anchor="middle" class="ax">Wed 26 Feb</text>
<text x="1306.0" y="729.0" text-anchor="middle" class="ax">Fri 28 Feb</text>
<text x="1463.0" y="729.0" text-anchor="middle" class="ax">Sun 02 Mar</text>
<text transform="translate(1608.2 487) rotate(90)" class="wm">RRDTOOL / TOBI OETIKER</text>
<text x="958.7" y="758.7" class="lg" text-anchor="start">Bits/s</text>
<text x="1089.6" y="758.7" class="lg" text-anchor="start">Last</text>
<text x="1200.9" y="758.7" class="lg" text-anchor="start">Avg</text>
<text x="1307.7" y="758.7" class="lg" text-anchor="start">Max</text>
<text x="1403.7" y="758.7" class="lg" text-anchor="start">95th</text>
<text x="983.4" y="782.7" class="lg" text-anchor="start">In</text>
<text x="983.8" y="806.7" class="lg" text-anchor="start">Out</text>
<text x="983.5" y="830.5" class="lg" text-anchor="start">Highest</text>
<text x="1132.3" y="782.7" class="lg" text-anchor="end">8.29G</text>
<text x="1244.2" y="782.7" class="lg" text-anchor="end">7.22G</text>
<text x="1356.5" y="782.7" class="lg" text-anchor="end">9.74G</text>
<text x="1468.0" y="782.7" class="lg" text-anchor="end">8.92G</text>
<text x="1132.3" y="806.7" class="lg" text-anchor="end">21.52G</text>
<text x="1244.2" y="806.7" class="lg" text-anchor="end">14.62G</text>
<text x="1356.5" y="806.7" class="lg" text-anchor="end">23.25G</text>
<text x="1468.0" y="806.7" class="lg" text-anchor="end">22.24G</text>
<text x="1468.0" y="830.5" class="lg" text-anchor="end">22.24G</text>
<text x="959.9" y="854.6" class="lg" text-anchor="start">Total</text>
<text x="1115.5" y="854.6" class="lg" text-anchor="end">1.65P</text>
<text x="1144.2" y="854.6" class="lg" text-anchor="start">(In</text>
<text x="1275.5" y="854.6" class="lg" text-anchor="end">545.93T</text>
<text x="1304.0" y="854.6" class="lg" text-anchor="start">Out</text>
<text x="1435.0" y="854.6" class="lg" text-anchor="end">1.11P</text>
<text x="1435.0" y="854.6" class="lg" text-anchor="start">)</text>
<line x1="959.7" y1="783.2" x2="974.2" y2="769.7" stroke="#3b783c" stroke-width="2.3"/>
<line x1="959.7" y1="807.2" x2="974.2" y2="793.7" stroke="#243e70" stroke-width="2.3"/>
<line x1="959.2" y1="824.8" x2="973.2" y2="824.8" stroke="#e8281e" stroke-width="2.3"/>
<path d="M323.2 961.2 L323.2 920.7 L323.8 920.7 L326.6 925.9 L327.7 925.9 L330.0 921.8 L332.3 920.8 L334.1 907.8 L338.7 907.3 L341.5 924.9 L344.3 926.9 L345.4 926.9 L347.7 916.2 L350.0 915.2 L351.8 908.6 L356.4 908.1 L359.2 922.1 L362.0 924.1 L363.2 924.1 L365.5 917.7 L367.8 916.7 L369.6 911.5 L374.2 911.0 L377.0 922.8 L379.8 924.8 L380.9 924.8 L383.2 920.6 L385.5 919.6 L387.3 909.2 L391.9 908.7 L394.7 924.3 L397.5 926.3 L398.6 926.3 L400.9 918.8 L403.2 917.8 L405.0 908.8 L409.6 908.3 L412.4 923.4 L415.2 925.4 L416.4 925.4 L418.7 921.8 L421.0 920.8 L422.8 908.0 L427.4 907.5 L430.2 924.9 L433.0 926.9 L434.1 926.9 L436.4 918.7 L438.7 917.7 L440.5 908.6 L445.1 908.1 L447.9 923.3 L450.7 925.3 L451.8 925.3 L454.1 921.8 L456.4 920.8 L458.2 908.8 L462.8 908.3 L465.6 924.9 L468.4 926.9 L469.5 926.9 L471.8 921.9 L474.1 920.9 L475.9 911.4 L480.5 910.9 L483.3 925.0 L486.1 927.0 L487.3 927.0 L489.6 917.5 L491.9 916.5 L493.7 908.0 L498.3 907.5 L501.1 922.7 L503.9 924.7 L505.0 924.7 L507.3 916.9 L509.6 915.9 L511.4 912.7 L516.0 912.2 L518.8 922.5 L521.6 924.5 L522.7 924.5 L525.0 921.3 L527.3 920.3 L529.1 908.7 L533.7 908.2 L536.5 924.6 L539.3 926.6 L540.5 926.6 L542.8 920.9 L545.1 919.9 L546.9 911.7 L551.5 911.2 L554.3 924.5 L557.1 926.5 L558.2 926.5 L560.5 919.7 L562.8 918.7 L564.6 910.9 L569.2 910.4 L572.0 923.8 L574.8 925.8 L575.9 925.8 L578.2 918.2 L580.5 917.2 L582.3 907.9 L586.9 907.4 L589.7 923.1 L592.5 925.1 L593.6 925.1 L595.9 916.8 L598.2 915.8 L600.0 911.6 L604.6 911.1 L607.4 922.4 L610.2 924.4 L611.4 924.4 L613.7 920.4 L616.0 919.4 L617.8 911.3 L622.4 910.8 L625.2 924.2 L628.0 926.2 L629.1 926.2 L631.4 920.8 L633.7 919.8 L635.5 911.9 L640.1 911.4 L642.9 924.4 L645.7 926.4 L646.8 926.4 L649.1 919.4 L651.4 918.4 L653.2 912.2 L657.8 911.7 L660.6 923.7 L663.4 925.7 L664.6 925.7 L666.9 920.4 L669.2 919.4 L671.0 913.5 L675.6 913.0 L678.4 924.2 L681.2 926.2 L682.3 926.2 L684.6 919.6 L686.9 918.6 L688.7 912.0 L693.3 911.5 L696.1 923.8 L698.9 925.8 L700.0 925.8 L702.3 917.8 L704.6 916.8 L706.4 909.0 L711.0 908.5 L713.8 922.9 L716.6 924.9 L717.8 924.9 L720.1 920.0 L722.4 919.0 L724.2 912.9 L728.8 912.4 L731.6 924.0 L734.4 926.0 L735.5 926.0 L737.8 916.8 L740.1 915.8 L741.9 911.0 L746.5 910.5 L749.3 922.4 L752.1 924.4 L753.2 924.4 L755.5 917.7 L757.8 916.7 L759.6 908.5 L764.2 908.0 L767.0 922.8 L769.8 924.8 L771.0 924.8 L773.2 916.4 L775.6 915.4 L777.4 913.4 L782.0 912.9 L784.8 922.2 L787.6 924.2 L788.7 924.2 L791.0 916.8 L793.3 915.8 L795.1 912.2 L799.7 911.7 L802.5 922.4 L805.3 924.4 L806.4 924.4 L808.7 919.8 L811.0 918.8 L812.8 911.3 L817.4 910.8 L820.2 923.9 L823.0 925.9 L824.1 925.9 L826.4 918.8 L828.7 917.8 L830.5 908.6 L835.1 908.1 L837.9 923.4 L840.7 925.4 L841.9 925.4 L844.2 918.4 L846.5 917.4 L848.3 911.2 L852.9 910.7 L855.7 923.2 L858.5 925.2 L859.6 925.2 L861.9 921.5 L864.2 920.5 L866.0 910.2 L870.0 909.8 L870.0 961.2Z" fill="#e9f3df"/>
<path d="M323.2 961.2 L323.2 1076.6 L324.2 1058.1 L326.0 1056.1 L327.7 1043.3 L329.5 1042.4 L331.5 1044.4 L335.0 1072.3 L337.1 1074.3 L339.3 1091.3 L340.1 1087.3 L341.9 1061.7 L343.7 1059.7 L345.4 1042.2 L347.2 1050.2 L349.2 1052.2 L352.7 1070.7 L354.8 1072.7 L357.0 1090.2 L357.8 1086.2 L359.6 1058.3 L361.4 1056.3 L363.2 1040.7 L365.0 1047.6 L367.0 1049.6 L370.5 1078.3 L372.6 1080.3 L374.8 1097.3 L375.6 1093.3 L377.4 1059.7 L379.2 1057.7 L380.9 1045.0 L382.7 1055.9 L384.7 1057.9 L388.2 1078.2 L390.3 1080.2 L392.5 1099.9 L393.3 1095.9 L395.1 1055.8 L396.9 1053.8 L398.6 1040.2 L400.4 1053.7 L402.4 1055.7 L405.9 1073.3 L408.0 1075.3 L410.2 1103.4 L411.0 1099.4 L412.8 1062.2 L414.6 1060.2 L416.4 1044.8 L418.2 1047.0 L420.2 1049.0 L423.7 1069.8 L425.8 1071.8 L428.0 1098.8 L428.8 1094.8 L430.6 1061.3 L432.4 1059.3 L434.1 1043.1 L435.9 1042.8 L437.9 1044.8 L441.4 1071.7 L443.5 1073.7 L445.7 1091.4 L446.5 1087.4 L448.3 1052.7 L450.1 1050.7 L451.8 1038.5 L453.6 1052.0 L455.6 1054.0 L459.1 1070.4 L461.2 1072.4 L463.4 1099.0 L464.2 1095.0 L466.0 1053.4 L467.8 1051.4 L469.5 1043.4 L471.3 1045.6 L473.3 1047.6 L476.8 1078.7 L478.9 1080.7 L481.1 1092.9 L481.9 1088.9 L483.7 1056.7 L485.5 1054.7 L487.3 1038.7 L489.1 1044.9 L491.1 1046.9 L494.6 1077.5 L496.7 1079.5 L498.9 1094.6 L499.7 1090.6 L501.5 1055.6 L503.3 1053.6 L505.0 1041.8 L506.8 1046.6 L508.8 1048.6 L512.3 1074.0 L514.4 1076.0 L516.6 1103.4 L517.4 1099.4 L519.2 1057.8 L521.0 1055.8 L522.7 1044.3 L524.5 1053.3 L526.5 1055.3 L530.0 1071.7 L532.1 1073.7 L534.3 1092.7 L535.1 1088.7 L536.9 1060.9 L538.7 1058.9 L540.5 1041.8 L542.3 1047.3 L544.3 1049.3 L547.8 1070.1 L549.9 1072.1 L552.1 1090.5 L552.9 1086.5 L554.7 1063.6 L556.5 1061.6 L558.2 1041.8 L560.0 1045.4 L562.0 1047.4 L565.5 1070.9 L567.6 1072.9 L569.8 1100.1 L570.6 1096.1 L572.4 1052.8 L574.2 1050.8 L575.9 1039.2 L577.7 1054.8 L579.7 1056.8 L583.2 1071.2 L585.3 1073.2 L587.5 1090.2 L588.3 1086.2 L590.1 1055.2 L591.9 1053.2 L593.6 1041.6 L595.4 1043.0 L597.4 1045.0 L600.9 1073.0 L603.0 1075.0 L605.2 1102.5 L606.0 1098.5 L607.9 1063.8 L609.6 1061.8 L611.4 1037.3 L613.2 1041.3 L615.2 1043.3 L618.7 1079.0 L620.8 1081.0 L623.0 1099.8 L623.8 1095.8 L625.6 1063.6 L627.4 1061.6 L629.1 1039.6 L630.9 1056.0 L632.9 1058.0 L636.4 1069.8 L638.5 1071.8 L640.7 1097.6 L641.5 1093.6 L643.3 1060.8 L645.1 1058.8 L646.8 1044.3 L648.6 1046.3 L650.6 1048.3 L654.1 1076.5 L656.2 1078.5 L658.4 1102.6 L659.2 1098.6 L661.0 1062.5 L662.8 1060.5 L664.6 1042.0 L666.4 1046.7 L668.4 1048.7 L671.9 1075.4 L674.0 1077.4 L676.2 1098.5 L677.0 1094.5 L678.8 1053.0 L680.6 1051.0 L682.3 1040.1 L684.1 1052.0 L686.1 1054.0 L689.6 1075.4 L691.7 1077.4 L693.9 1096.2 L694.7 1092.2 L696.5 1062.1 L698.3 1060.1 L700.0 1040.8 L701.8 1044.5 L703.8 1046.5 L707.3 1076.7 L709.4 1078.7 L711.6 1097.0 L712.4 1093.0 L714.2 1059.4 L716.0 1057.4 L717.8 1042.4 L719.6 1044.0 L721.6 1046.0 L725.1 1070.9 L727.2 1072.9 L729.4 1102.7 L730.2 1098.7 L732.0 1059.9 L733.8 1057.9 L735.5 1038.6 L737.3 1047.5 L739.3 1049.5 L742.8 1077.9 L744.9 1079.9 L747.1 1102.8 L747.9 1098.8 L749.7 1062.6 L751.5 1060.6 L753.2 1041.0 L755.0 1053.6 L757.0 1055.6 L760.5 1078.3 L762.6 1080.3 L764.8 1100.0 L765.6 1096.0 L767.4 1063.4 L769.2 1061.4 L771.0 1038.7 L772.8 1047.2 L774.8 1049.2 L778.2 1075.9 L780.4 1077.9 L782.6 1096.9 L783.4 1092.9 L785.2 1055.8 L787.0 1053.8 L788.7 1037.3 L790.5 1054.1 L792.5 1056.1 L796.0 1069.5 L798.1 1071.5 L800.3 1099.9 L801.1 1095.9 L802.9 1058.8 L804.7 1056.8 L806.4 1040.6 L808.2 1041.4 L810.2 1043.4 L813.7 1078.1 L815.8 1080.1 L818.0 1093.3 L818.8 1089.3 L820.6 1053.7 L822.4 1051.7 L824.1 1042.2 L825.9 1053.1 L827.9 1055.1 L831.4 1079.5 L833.5 1081.5 L835.7 1099.6 L836.5 1095.6 L838.3 1054.4 L840.1 1052.4 L841.9 1042.7 L843.7 1043.7 L845.7 1045.7 L849.2 1072.0 L851.3 1074.0 L853.5 1094.8 L854.3 1090.8 L856.1 1060.4 L857.9 1058.4 L859.6 1043.3 L861.4 1054.6 L863.4 1056.6 L866.9 1070.0 L869.0 1072.0 L870.0 1086.1 L870.0 961.2Z" fill="#dfe6f2"/>
<path d="M323.2 961.2 L323.2 923.7 L323.8 926.9 L326.6 928.9 L327.7 938.9 L330.0 924.8 L332.3 923.8 L334.1 910.8 L338.7 910.3 L341.5 927.9 L344.3 929.9 L345.4 935.2 L347.7 919.2 L350.0 918.2 L351.8 911.6 L356.4 911.1 L359.2 925.1 L362.0 927.1 L363.2 936.3 L365.5 920.7 L367.8 919.7 L369.6 914.5 L374.2 914.0 L377.0 925.8 L379.8 927.8 L380.9 934.4 L383.2 923.6 L385.5 922.6 L387.3 912.2 L391.9 911.7 L394.7 927.3 L397.5 929.3 L398.6 938.6 L400.9 921.8 L403.2 920.8 L405.0 911.8 L409.6 911.3 L412.4 926.4 L415.2 928.4 L416.4 935.7 L418.7 924.8 L421.0 923.8 L422.8 911.0 L427.4 910.5 L430.2 927.9 L433.0 929.9 L434.1 936.8 L436.4 921.7 L438.7 920.7 L440.5 911.6 L445.1 911.1 L447.9 926.3 L450.7 928.3 L451.8 935.3 L454.1 924.8 L456.4 923.8 L458.2 911.8 L462.8 911.3 L465.6 927.9 L468.4 929.9 L469.5 934.5 L471.8 924.9 L474.1 923.9 L475.9 914.4 L480.5 913.9 L483.3 928.0 L486.1 930.0 L487.3 936.9 L489.6 920.5 L491.9 919.5 L493.7 911.0 L498.3 910.5 L501.1 925.7 L503.9 927.7 L505.0 934.9 L507.3 919.9 L509.6 918.9 L511.4 915.7 L516.0 915.2 L518.8 925.5 L521.6 927.5 L522.7 938.8 L525.0 924.3 L527.3 923.3 L529.1 911.7 L533.7 911.2 L536.5 927.6 L539.3 929.6 L540.5 935.3 L542.8 923.9 L545.1 922.9 L546.9 914.7 L551.5 914.2 L554.3 927.5 L557.1 929.5 L558.2 938.3 L560.5 922.7 L562.8 921.7 L564.6 913.9 L569.2 913.4 L572.0 926.8 L574.8 928.8 L575.9 934.9 L578.2 921.2 L580.5 920.2 L582.3 910.9 L586.9 910.4 L589.7 926.1 L592.5 928.1 L593.6 936.9 L595.9 919.8 L598.2 918.8 L600.0 914.6 L604.6 914.1 L607.4 925.4 L610.2 927.4 L611.4 936.4 L613.7 923.4 L616.0 922.4 L617.8 914.3 L622.4 913.8 L625.2 927.2 L628.0 929.2 L629.1 937.5 L631.4 923.8 L633.7 922.8 L635.5 914.9 L640.1 914.4 L642.9 927.4 L645.7 929.4 L646.8 938.3 L649.1 922.4 L651.4 921.4 L653.2 915.2 L657.8 914.7 L660.6 926.7 L663.4 928.7 L664.6 938.4 L666.9 923.4 L669.2 922.4 L671.0 916.5 L675.6 916.0 L678.4 927.2 L681.2 929.2 L682.3 934.1 L684.6 922.6 L686.9 921.6 L688.7 915.0 L693.3 914.5 L696.1 926.8 L698.9 928.8 L700.0 934.1 L702.3 920.8 L704.6 919.8 L706.4 912.0 L711.0 911.5 L713.8 925.9 L716.6 927.9 L717.8 935.6 L720.1 923.0 L722.4 922.0 L724.2 915.9 L728.8 915.4 L731.6 927.0 L734.4 929.0 L735.5 935.6 L737.8 919.8 L740.1 918.8 L741.9 914.0 L746.5 913.5 L749.3 925.4 L752.1 927.4 L753.2 936.3 L755.5 920.7 L757.8 919.7 L759.6 911.5 L764.2 911.0 L767.0 925.8 L769.8 927.8 L771.0 936.3 L773.2 919.4 L775.6 918.4 L777.4 916.4 L782.0 915.9 L784.8 925.2 L787.6 927.2 L788.7 934.1 L791.0 919.8 L793.3 918.8 L795.1 915.2 L799.7 914.7 L802.5 925.4 L805.3 927.4 L806.4 936.2 L808.7 922.8 L811.0 921.8 L812.8 914.3 L817.4 913.8 L820.2 926.9 L823.0 928.9 L824.1 934.1 L826.4 921.8 L828.7 920.8 L830.5 911.6 L835.1 911.1 L837.9 926.4 L840.7 928.4 L841.9 937.8 L844.2 921.4 L846.5 920.4 L848.3 914.2 L852.9 913.7 L855.7 926.2 L858.5 928.2 L859.6 937.1 L861.9 924.5 L864.2 923.5 L866.0 913.2 L870.0 912.8 L870.0 961.2Z" fill="#90b86c"/>
<path d="M323.2 961.2 L323.2 1061.1 L324.2 1036.1 L326.0 1035.1 L327.7 997.8 L329.5 1018.4 L331.5 1019.9 L335.0 1058.3 L337.1 1060.3 L339.3 1079.3 L340.1 1077.3 L341.9 1039.7 L343.7 1038.7 L345.4 996.7 L347.2 1026.2 L349.2 1027.7 L352.7 1056.7 L354.8 1058.7 L357.0 1078.2 L357.8 1076.2 L359.6 1036.3 L361.4 1035.3 L363.2 995.2 L365.0 1023.6 L367.0 1025.1 L370.5 1064.3 L372.6 1066.3 L374.8 1085.3 L375.6 1083.3 L377.4 1037.7 L379.2 1036.7 L380.9 999.5 L382.7 1031.9 L384.7 1033.4 L388.2 1064.2 L390.3 1066.2 L392.5 1087.9 L393.3 1085.9 L395.1 1033.8 L396.9 1032.8 L398.6 994.7 L400.4 1029.7 L402.4 1031.2 L405.9 1059.3 L408.0 1061.3 L410.2 1091.4 L411.0 1089.4 L412.8 1040.2 L414.6 1039.2 L416.4 999.3 L418.2 1023.0 L420.2 1024.5 L423.7 1055.8 L425.8 1057.8 L428.0 1086.8 L428.8 1084.8 L430.6 1039.3 L432.4 1038.3 L434.1 997.6 L435.9 1018.8 L437.9 1020.3 L441.4 1057.7 L443.5 1059.7 L445.7 1079.4 L446.5 1077.4 L448.3 1030.7 L450.1 1029.7 L451.8 993.0 L453.6 1028.0 L455.6 1029.5 L459.1 1056.4 L461.2 1058.4 L463.4 1087.0 L464.2 1085.0 L466.0 1031.4 L467.8 1030.4 L469.5 997.9 L471.3 1021.6 L473.3 1023.1 L476.8 1064.7 L478.9 1066.7 L481.1 1080.9 L481.9 1078.9 L483.7 1034.7 L485.5 1033.7 L487.3 993.2 L489.1 1020.9 L491.1 1022.4 L494.6 1063.5 L496.7 1065.5 L498.9 1082.6 L499.7 1080.6 L501.5 1033.6 L503.3 1032.6 L505.0 996.3 L506.8 1022.6 L508.8 1024.1 L512.3 1060.0 L514.4 1062.0 L516.6 1091.4 L517.4 1089.4 L519.2 1035.8 L521.0 1034.8 L522.7 998.8 L524.5 1029.3 L526.5 1030.8 L530.0 1057.7 L532.1 1059.7 L534.3 1080.7 L535.1 1078.7 L536.9 1038.9 L538.7 1037.9 L540.5 996.3 L542.3 1023.3 L544.3 1024.8 L547.8 1056.1 L549.9 1058.1 L552.1 1078.5 L552.9 1076.5 L554.7 1041.6 L556.5 1040.6 L558.2 996.3 L560.0 1021.4 L562.0 1022.9 L565.5 1056.9 L567.6 1058.9 L569.8 1088.1 L570.6 1086.1 L572.4 1030.8 L574.2 1029.8 L575.9 993.7 L577.7 1030.8 L579.7 1032.3 L583.2 1057.2 L585.3 1059.2 L587.5 1078.2 L588.3 1076.2 L590.1 1033.2 L591.9 1032.2 L593.6 996.1 L595.4 1019.0 L597.4 1020.5 L600.9 1059.0 L603.0 1061.0 L605.2 1090.5 L606.0 1088.5 L607.9 1041.8 L609.6 1040.8 L611.4 991.8 L613.2 1017.3 L615.2 1018.8 L618.7 1065.0 L620.8 1067.0 L623.0 1087.8 L623.8 1085.8 L625.6 1041.6 L627.4 1040.6 L629.1 994.1 L630.9 1032.0 L632.9 1033.5 L636.4 1055.8 L638.5 1057.8 L640.7 1085.6 L641.5 1083.6 L643.3 1038.8 L645.1 1037.8 L646.8 998.8 L648.6 1022.3 L650.6 1023.8 L654.1 1062.5 L656.2 1064.5 L658.4 1090.6 L659.2 1088.6 L661.0 1040.5 L662.8 1039.5 L664.6 996.5 L666.4 1022.7 L668.4 1024.2 L671.9 1061.4 L674.0 1063.4 L676.2 1086.5 L677.0 1084.5 L678.8 1031.0 L680.6 1030.0 L682.3 994.6 L684.1 1028.0 L686.1 1029.5 L689.6 1061.4 L691.7 1063.4 L693.9 1084.2 L694.7 1082.2 L696.5 1040.1 L698.3 1039.1 L700.0 995.3 L701.8 1020.5 L703.8 1022.0 L707.3 1062.7 L709.4 1064.7 L711.6 1085.0 L712.4 1083.0 L714.2 1037.4 L716.0 1036.4 L717.8 996.9 L719.6 1020.0 L721.6 1021.5 L725.1 1056.9 L727.2 1058.9 L729.4 1090.7 L730.2 1088.7 L732.0 1037.9 L733.8 1036.9 L735.5 993.1 L737.3 1023.5 L739.3 1025.0 L742.8 1063.9 L744.9 1065.9 L747.1 1090.8 L747.9 1088.8 L749.7 1040.6 L751.5 1039.6 L753.2 995.5 L755.0 1029.6 L757.0 1031.1 L760.5 1064.3 L762.6 1066.3 L764.8 1088.0 L765.6 1086.0 L767.4 1041.4 L769.2 1040.4 L771.0 993.2 L772.8 1023.2 L774.8 1024.7 L778.2 1061.9 L780.4 1063.9 L782.6 1084.9 L783.4 1082.9 L785.2 1033.8 L787.0 1032.8 L788.7 991.8 L790.5 1030.1 L792.5 1031.6 L796.0 1055.5 L798.1 1057.5 L800.3 1087.9 L801.1 1085.9 L802.9 1036.8 L804.7 1035.8 L806.4 995.1 L808.2 1017.4 L810.2 1018.9 L813.7 1064.1 L815.8 1066.1 L818.0 1081.3 L818.8 1079.3 L820.6 1031.7 L822.4 1030.7 L824.1 996.7 L825.9 1029.1 L827.9 1030.6 L831.4 1065.5 L833.5 1067.5 L835.7 1087.6 L836.5 1085.6 L838.3 1032.4 L840.1 1031.4 L841.9 997.2 L843.7 1019.7 L845.7 1021.2 L849.2 1058.0 L851.3 1060.0 L853.5 1082.8 L854.3 1080.8 L856.1 1038.4 L857.9 1037.4 L859.6 997.8 L861.4 1030.6 L863.4 1032.1 L866.9 1056.0 L869.0 1058.0 L870.0 1073.0 L870.0 961.2Z" fill="#7893c4"/>
<line x1="323" y1="906.5" x2="875.5" y2="906.5" stroke="#ff8080" stroke-width="1" stroke-dasharray="2 2"/>
<line x1="318" y1="906.5" x2="322" y2="906.5" stroke="#ff8080" stroke-width="1"/>
<line x1="871" y1="906.5" x2="875.5" y2="906.5" stroke="#ff8080" stroke-width="1"/>
<line x1="323" y1="917.5" x2="875.5" y2="917.5" stroke="#9a9a9a" stroke-width="1" stroke-dasharray="2 2"/>
<line x1="318" y1="917.5" x2="322" y2="917.5" stroke="#555" stroke-width="1"/>
<line x1="871" y1="917.5" x2="875.5" y2="917.5" stroke="#555" stroke-width="1"/>
<line x1="323" y1="928.5" x2="875.5" y2="928.5" stroke="#9a9a9a" stroke-width="1" stroke-dasharray="2 2"/>
<line x1="318" y1="928.5" x2="322" y2="928.5" stroke="#555" stroke-width="1"/>
<line x1="871" y1="928.5" x2="875.5" y2="928.5" stroke="#555" stroke-width="1"/>
<line x1="323" y1="939.5" x2="875.5" y2="939.5" stroke="#9a9a9a" stroke-width="1" stroke-dasharray="2 2"/>
<line x1="318" y1="939.5" x2="322" y2="939.5" stroke="#555" stroke-width="1"/>
<line x1="871" y1="939.5" x2="875.5" y2="939.5" stroke="#555" stroke-width="1"/>
<line x1="323" y1="950.5" x2="875.5" y2="950.5" stroke="#9a9a9a" stroke-width="1" stroke-dasharray="2 2"/>
<line x1="318" y1="950.5" x2="322" y2="950.5" stroke="#555" stroke-width="1"/>
<line x1="871" y1="950.5" x2="875.5" y2="950.5" stroke="#555" stroke-width="1"/>
<line x1="323" y1="961.5" x2="875.5" y2="961.5" stroke="#ff8080" stroke-width="1" stroke-dasharray="2 2"/>
<line x1="318" y1="961.5" x2="322" y2="961.5" stroke="#ff8080" stroke-width="1"/>
<line x1="871" y1="961.5" x2="875.5" y2="961.5" stroke="#ff8080" stroke-width="1"/>
<line x1="323" y1="972.5" x2="875.5" y2="972.5" stroke="#9a9a9a" stroke-width="1" stroke-dasharray="2 2"/>
<line x1="318" y1="972.5" x2="322" y2="972.5" stroke="#555" stroke-width="1"/>
<line x1="871" y1="972.5" x2="875.5" y2="972.5" stroke="#555" stroke-width="1"/>
<line x1="323" y1="983.5" x2="875.5" y2="983.5" stroke="#9a9a9a" stroke-width="1" stroke-dasharray="2 2"/>
<line x1="318" y1="983.5" x2="322" y2="983.5" stroke="#555" stroke-width="1"/>
<line x1="871" y1="983.5" x2="875.5" y2="983.5" stroke="#555" stroke-width="1"/>
<line x1="323" y1="993.5" x2="875.5" y2="993.5" stroke="#9a9a9a" stroke-width="1" stroke-dasharray="2 2"/>
<line x1="318" y1="993.5" x2="322" y2="993.5" stroke="#555" stroke-width="1"/>
<line x1="871" y1="993.5" x2="875.5" y2="993.5" stroke="#555" stroke-width="1"/>
<line x1="323" y1="1004.5" x2="875.5" y2="1004.5" stroke="#9a9a9a" stroke-width="1" stroke-dasharray="2 2"/>
<line x1="318" y1="1004.5" x2="322" y2="1004.5" stroke="#555" stroke-width="1"/>
<line x1="871" y1="1004.5" x2="875.5" y2="1004.5" stroke="#555" stroke-width="1"/>
<line x1="323" y1="1015.5" x2="875.5" y2="1015.5" stroke="#ff8080" stroke-width="1" stroke-dasharray="2 2"/>
<line x1="318" y1="1015.5" x2="322" y2="1015.5" stroke="#ff8080" stroke-width="1"/>
<line x1="871" y1="1015.5" x2="875.5" y2="1015.5" stroke="#ff8080" stroke-width="1"/>
<line x1="323" y1="1026.5" x2="875.5" y2="1026.5" stroke="#9a9a9a" stroke-width="1" stroke-dasharray="2 2"/>
<line x1="318" y1="1026.5" x2="322" y2="1026.5" stroke="#555" stroke-width="1"/>
<line x1="871" y1="1026.5" x2="875.5" y2="1026.5" stroke="#555" stroke-width="1"/>
<line x1="323" y1="1037.5" x2="875.5" y2="1037.5" stroke="#9a9a9a" stroke-width="1" stroke-dasharray="2 2"/>
<line x1="318" y1="1037.5" x2="322" y2="1037.5" stroke="#555" stroke-width="1"/>
<line x1="871" y1="1037.5" x2="875.5" y2="1037.5" stroke="#555" stroke-width="1"/>
<line x1="323" y1="1048.5" x2="875.5" y2="1048.5" stroke="#9a9a9a" stroke-width="1" stroke-dasharray="2 2"/>
<line x1="318" y1="1048.5" x2="322" y2="1048.5" stroke="#555" stroke-width="1"/>
<line x1="871" y1="1048.5" x2="875.5" y2="1048.5" stroke="#555" stroke-width="1"/>
<line x1="323" y1="1059.5" x2="875.5" y2="1059.5" stroke="#9a9a9a" stroke-width="1" stroke-dasharray="2 2"/>
<line x1="318" y1="1059.5" x2="322" y2="1059.5" stroke="#555" stroke-width="1"/>
<line x1="871" y1="1059.5" x2="875.5" y2="1059.5" stroke="#555" stroke-width="1"/>
<line x1="323" y1="1070.5" x2="875.5" y2="1070.5" stroke="#ff8080" stroke-width="1" stroke-dasharray="2 2"/>
<line x1="318" y1="1070.5" x2="322" y2="1070.5" stroke="#ff8080" stroke-width="1"/>
<line x1="871" y1="1070.5" x2="875.5" y2="1070.5" stroke="#ff8080" stroke-width="1"/>
<line x1="323" y1="1081.5" x2="875.5" y2="1081.5" stroke="#9a9a9a" stroke-width="1" stroke-dasharray="2 2"/>
<line x1="318" y1="1081.5" x2="322" y2="1081.5" stroke="#555" stroke-width="1"/>
<line x1="871" y1="1081.5" x2="875.5" y2="1081.5" stroke="#555" stroke-width="1"/>
<line x1="323" y1="1092.5" x2="875.5" y2="1092.5" stroke="#9a9a9a" stroke-width="1" stroke-dasharray="2 2"/>
<line x1="318" y1="1092.5" x2="322" y2="1092.5" stroke="#555" stroke-width="1"/>
<line x1="871" y1="1092.5" x2="875.5" y2="1092.5" stroke="#555" stroke-width="1"/>
<line x1="341.5" y1="898.8" x2="341.5" y2="1109.3" stroke="#ff8080" stroke-width="1" stroke-dasharray="2 2"/>
<line x1="359.5" y1="898.8" x2="359.5" y2="1107.3" stroke="#9a9a9a" stroke-width="1" stroke-dasharray="2 2"/>
<line x1="359.5" y1="898.8" x2="359.5" y2="903.8" stroke="#666" stroke-width="1"/>
<line x1="359.5" y1="1103.3" x2="359.5" y2="1107.3" stroke="#666" stroke-width="1"/>
<line x1="376.5" y1="898.8" x2="376.5" y2="1107.3" stroke="#9a9a9a" stroke-width="1" stroke-dasharray="2 2"/>
<line x1="376.5" y1="898.8" x2="376.5" y2="903.8" stroke="#666" stroke-width="1"/>
<line x1="376.5" y1="1103.3" x2="376.5" y2="1107.3" stroke="#666" stroke-width="1"/>
<line x1="394.5" y1="898.8" x2="394.5" y2="1107.3" stroke="#9a9a9a" stroke-width="1" stroke-dasharray="2 2"/>
<line x1="394.5" y1="898.8" x2="394.5" y2="903.8" stroke="#666" stroke-width="1"/>
<line x1="394.5" y1="1103.3" x2="394.5" y2="1107.3" stroke="#666" stroke-width="1"/>
<line x1="412.5" y1="898.8" x2="412.5" y2="1107.3" stroke="#9a9a9a" stroke-width="1" stroke-dasharray="2 2"/>
<line x1="412.5" y1="898.8" x2="412.5" y2="903.8" stroke="#666" stroke-width="1"/>
<line x1="412.5" y1="1103.3" x2="412.5" y2="1107.3" stroke="#666" stroke-width="1"/>
<line x1="430.5" y1="898.8" x2="430.5" y2="1107.3" stroke="#9a9a9a" stroke-width="1" stroke-dasharray="2 2"/>
<line x1="430.5" y1="898.8" x2="430.5" y2="903.8" stroke="#666" stroke-width="1"/>
<line x1="430.5" y1="1103.3" x2="430.5" y2="1107.3" stroke="#666" stroke-width="1"/>
<line x1="447.5" y1="898.8" x2="447.5" y2="1107.3" stroke="#9a9a9a" stroke-width="1" stroke-dasharray="2 2"/>
<line x1="447.5" y1="898.8" x2="447.5" y2="903.8" stroke="#666" stroke-width="1"/>
<line x1="447.5" y1="1103.3" x2="447.5" y2="1107.3" stroke="#666" stroke-width="1"/>
<line x1="465.5" y1="898.8" x2="465.5" y2="1109.3" stroke="#ff8080" stroke-width="1" stroke-dasharray="2 2"/>
<line x1="483.5" y1="898.8" x2="483.5" y2="1107.3" stroke="#9a9a9a" stroke-width="1" stroke-dasharray="2 2"/>
<line x1="483.5" y1="898.8" x2="483.5" y2="903.8" stroke="#666" stroke-width="1"/>
<line x1="483.5" y1="1103.3" x2="483.5" y2="1107.3" stroke="#666" stroke-width="1"/>
<line x1="500.5" y1="898.8" x2="500.5" y2="1107.3" stroke="#9a9a9a" stroke-width="1" stroke-dasharray="2 2"/>
<line x1="500.5" y1="898.8" x2="500.5" y2="903.8" stroke="#666" stroke-width="1"/>
<line x1="500.5" y1="1103.3" x2="500.5" y2="1107.3" stroke="#666" stroke-width="1"/>
<line x1="518.5" y1="898.8" x2="518.5" y2="1107.3" stroke="#9a9a9a" stroke-width="1" stroke-dasharray="2 2"/>
<line x1="518.5" y1="898.8" x2="518.5" y2="903.8" stroke="#666" stroke-width="1"/>
<line x1="518.5" y1="1103.3" x2="518.5" y2="1107.3" stroke="#666" stroke-width="1"/>
<line x1="536.5" y1="898.8" x2="536.5" y2="1107.3" stroke="#9a9a9a" stroke-width="1" stroke-dasharray="2 2"/>
<line x1="536.5" y1="898.8" x2="536.5" y2="903.8" stroke="#666" stroke-width="1"/>
<line x1="536.5" y1="1103.3" x2="536.5" y2="1107.3" stroke="#666" stroke-width="1"/>
<line x1="554.5" y1="898.8" x2="554.5" y2="1107.3" stroke="#9a9a9a" stroke-width="1" stroke-dasharray="2 2"/>
<line x1="554.5" y1="898.8" x2="554.5" y2="903.8" stroke="#666" stroke-width="1"/>
<line x1="554.5" y1="1103.3" x2="554.5" y2="1107.3" stroke="#666" stroke-width="1"/>
<line x1="571.5" y1="898.8" x2="571.5" y2="1107.3" stroke="#9a9a9a" stroke-width="1" stroke-dasharray="2 2"/>
<line x1="571.5" y1="898.8" x2="571.5" y2="903.8" stroke="#666" stroke-width="1"/>
<line x1="571.5" y1="1103.3" x2="571.5" y2="1107.3" stroke="#666" stroke-width="1"/>
<line x1="589.5" y1="898.8" x2="589.5" y2="1109.3" stroke="#ff8080" stroke-width="1" stroke-dasharray="2 2"/>
<line x1="607.5" y1="898.8" x2="607.5" y2="1107.3" stroke="#9a9a9a" stroke-width="1" stroke-dasharray="2 2"/>
<line x1="607.5" y1="898.8" x2="607.5" y2="903.8" stroke="#666" stroke-width="1"/>
<line x1="607.5" y1="1103.3" x2="607.5" y2="1107.3" stroke="#666" stroke-width="1"/>
<line x1="624.5" y1="898.8" x2="624.5" y2="1107.3" stroke="#9a9a9a" stroke-width="1" stroke-dasharray="2 2"/>
<line x1="624.5" y1="898.8" x2="624.5" y2="903.8" stroke="#666" stroke-width="1"/>
<line x1="624.5" y1="1103.3" x2="624.5" y2="1107.3" stroke="#666" stroke-width="1"/>
<line x1="642.5" y1="898.8" x2="642.5" y2="1107.3" stroke="#9a9a9a" stroke-width="1" stroke-dasharray="2 2"/>
<line x1="642.5" y1="898.8" x2="642.5" y2="903.8" stroke="#666" stroke-width="1"/>
<line x1="642.5" y1="1103.3" x2="642.5" y2="1107.3" stroke="#666" stroke-width="1"/>
<line x1="660.5" y1="898.8" x2="660.5" y2="1107.3" stroke="#9a9a9a" stroke-width="1" stroke-dasharray="2 2"/>
<line x1="660.5" y1="898.8" x2="660.5" y2="903.8" stroke="#666" stroke-width="1"/>
<line x1="660.5" y1="1103.3" x2="660.5" y2="1107.3" stroke="#666" stroke-width="1"/>
<line x1="677.5" y1="898.8" x2="677.5" y2="1107.3" stroke="#9a9a9a" stroke-width="1" stroke-dasharray="2 2"/>
<line x1="677.5" y1="898.8" x2="677.5" y2="903.8" stroke="#666" stroke-width="1"/>
<line x1="677.5" y1="1103.3" x2="677.5" y2="1107.3" stroke="#666" stroke-width="1"/>
<line x1="695.5" y1="898.8" x2="695.5" y2="1107.3" stroke="#9a9a9a" stroke-width="1" stroke-dasharray="2 2"/>
<line x1="695.5" y1="898.8" x2="695.5" y2="903.8" stroke="#666" stroke-width="1"/>
<line x1="695.5" y1="1103.3" x2="695.5" y2="1107.3" stroke="#666" stroke-width="1"/>
<line x1="713.5" y1="898.8" x2="713.5" y2="1109.3" stroke="#ff8080" stroke-width="1" stroke-dasharray="2 2"/>
<line x1="731.5" y1="898.8" x2="731.5" y2="1107.3" stroke="#9a9a9a" stroke-width="1" stroke-dasharray="2 2"/>
<line x1="731.5" y1="898.8" x2="731.5" y2="903.8" stroke="#666" stroke-width="1"/>
<line x1="731.5" y1="1103.3" x2="731.5" y2="1107.3" stroke="#666" stroke-width="1"/>
<line x1="748.5" y1="898.8" x2="748.5" y2="1107.3" stroke="#9a9a9a" stroke-width="1" stroke-dasharray="2 2"/>
<line x1="748.5" y1="898.8" x2="748.5" y2="903.8" stroke="#666" stroke-width="1"/>
<line x1="748.5" y1="1103.3" x2="748.5" y2="1107.3" stroke="#666" stroke-width="1"/>
<line x1="766.5" y1="898.8" x2="766.5" y2="1107.3" stroke="#9a9a9a" stroke-width="1" stroke-dasharray="2 2"/>
<line x1="766.5" y1="898.8" x2="766.5" y2="903.8" stroke="#666" stroke-width="1"/>
<line x1="766.5" y1="1103.3" x2="766.5" y2="1107.3" stroke="#666" stroke-width="1"/>
<line x1="784.5" y1="898.8" x2="784.5" y2="1107.3" stroke="#9a9a9a" stroke-width="1" stroke-dasharray="2 2"/>
<line x1="784.5" y1="898.8" x2="784.5" y2="903.8" stroke="#666" stroke-width="1"/>
<line x1="784.5" y1="1103.3" x2="784.5" y2="1107.3" stroke="#666" stroke-width="1"/>
<line x1="801.5" y1="898.8" x2="801.5" y2="1107.3" stroke="#9a9a9a" stroke-width="1" stroke-dasharray="2 2"/>
<line x1="801.5" y1="898.8" x2="801.5" y2="903.8" stroke="#666" stroke-width="1"/>
<line x1="801.5" y1="1103.3" x2="801.5" y2="1107.3" stroke="#666" stroke-width="1"/>
<line x1="819.5" y1="898.8" x2="819.5" y2="1107.3" stroke="#9a9a9a" stroke-width="1" stroke-dasharray="2 2"/>
<line x1="819.5" y1="898.8" x2="819.5" y2="903.8" stroke="#666" stroke-width="1"/>
<line x1="819.5" y1="1103.3" x2="819.5" y2="1107.3" stroke="#666" stroke-width="1"/>
<line x1="837.5" y1="898.8" x2="837.5" y2="1109.3" stroke="#ff8080" stroke-width="1" stroke-dasharray="2 2"/>
<line x1="855.5" y1="898.8" x2="855.5" y2="1107.3" stroke="#9a9a9a" stroke-width="1" stroke-dasharray="2 2"/>
<line x1="855.5" y1="898.8" x2="855.5" y2="903.8" stroke="#666" stroke-width="1"/>
<line x1="855.5" y1="1103.3" x2="855.5" y2="1107.3" stroke="#666" stroke-width="1"/>
<path d="M323.2 923.7 L323.8 926.9 L326.6 928.9 L327.7 938.9 L330.0 924.8 L332.3 923.8 L334.1 910.8 L338.7 910.3 L341.5 927.9 L344.3 929.9 L345.4 935.2 L347.7 919.2 L350.0 918.2 L351.8 911.6 L356.4 911.1 L359.2 925.1 L362.0 927.1 L363.2 936.3 L365.5 920.7 L367.8 919.7 L369.6 914.5 L374.2 914.0 L377.0 925.8 L379.8 927.8 L380.9 934.4 L383.2 923.6 L385.5 922.6 L387.3 912.2 L391.9 911.7 L394.7 927.3 L397.5 929.3 L398.6 938.6 L400.9 921.8 L403.2 920.8 L405.0 911.8 L409.6 911.3 L412.4 926.4 L415.2 928.4 L416.4 935.7 L418.7 924.8 L421.0 923.8 L422.8 911.0 L427.4 910.5 L430.2 927.9 L433.0 929.9 L434.1 936.8 L436.4 921.7 L438.7 920.7 L440.5 911.6 L445.1 911.1 L447.9 926.3 L450.7 928.3 L451.8 935.3 L454.1 924.8 L456.4 923.8 L458.2 911.8 L462.8 911.3 L465.6 927.9 L468.4 929.9 L469.5 934.5 L471.8 924.9 L474.1 923.9 L475.9 914.4 L480.5 913.9 L483.3 928.0 L486.1 930.0 L487.3 936.9 L489.6 920.5 L491.9 919.5 L493.7 911.0 L498.3 910.5 L501.1 925.7 L503.9 927.7 L505.0 934.9 L507.3 919.9 L509.6 918.9 L511.4 915.7 L516.0 915.2 L518.8 925.5 L521.6 927.5 L522.7 938.8 L525.0 924.3 L527.3 923.3 L529.1 911.7 L533.7 911.2 L536.5 927.6 L539.3 929.6 L540.5 935.3 L542.8 923.9 L545.1 922.9 L546.9 914.7 L551.5 914.2 L554.3 927.5 L557.1 929.5 L558.2 938.3 L560.5 922.7 L562.8 921.7 L564.6 913.9 L569.2 913.4 L572.0 926.8 L574.8 928.8 L575.9 934.9 L578.2 921.2 L580.5 920.2 L582.3 910.9 L586.9 910.4 L589.7 926.1 L592.5 928.1 L593.6 936.9 L595.9 919.8 L598.2 918.8 L600.0 914.6 L604.6 914.1 L607.4 925.4 L610.2 927.4 L611.4 936.4 L613.7 923.4 L616.0 922.4 L617.8 914.3 L622.4 913.8 L625.2 927.2 L628.0 929.2 L629.1 937.5 L631.4 923.8 L633.7 922.8 L635.5 914.9 L640.1 914.4 L642.9 927.4 L645.7 929.4 L646.8 938.3 L649.1 922.4 L651.4 921.4 L653.2 915.2 L657.8 914.7 L660.6 926.7 L663.4 928.7 L664.6 938.4 L666.9 923.4 L669.2 922.4 L671.0 916.5 L675.6 916.0 L678.4 927.2 L681.2 929.2 L682.3 934.1 L684.6 922.6 L686.9 921.6 L688.7 915.0 L693.3 914.5 L696.1 926.8 L698.9 928.8 L700.0 934.1 L702.3 920.8 L704.6 919.8 L706.4 912.0 L711.0 911.5 L713.8 925.9 L716.6 927.9 L717.8 935.6 L720.1 923.0 L722.4 922.0 L724.2 915.9 L728.8 915.4 L731.6 927.0 L734.4 929.0 L735.5 935.6 L737.8 919.8 L740.1 918.8 L741.9 914.0 L746.5 913.5 L749.3 925.4 L752.1 927.4 L753.2 936.3 L755.5 920.7 L757.8 919.7 L759.6 911.5 L764.2 911.0 L767.0 925.8 L769.8 927.8 L771.0 936.3 L773.2 919.4 L775.6 918.4 L777.4 916.4 L782.0 915.9 L784.8 925.2 L787.6 927.2 L788.7 934.1 L791.0 919.8 L793.3 918.8 L795.1 915.2 L799.7 914.7 L802.5 925.4 L805.3 927.4 L806.4 936.2 L808.7 922.8 L811.0 921.8 L812.8 914.3 L817.4 913.8 L820.2 926.9 L823.0 928.9 L824.1 934.1 L826.4 921.8 L828.7 920.8 L830.5 911.6 L835.1 911.1 L837.9 926.4 L840.7 928.4 L841.9 937.8 L844.2 921.4 L846.5 920.4 L848.3 914.2 L852.9 913.7 L855.7 926.2 L858.5 928.2 L859.6 937.1 L861.9 924.5 L864.2 923.5 L866.0 913.2 L870.0 912.8" fill="none" stroke="#3b783c" stroke-width="2.3" stroke-linejoin="round"/>
<path d="M323.2 1061.1 L324.2 1036.1 L326.0 1035.1 L327.7 997.8 L329.5 1018.4 L331.5 1019.9 L335.0 1058.3 L337.1 1060.3 L339.3 1079.3 L340.1 1077.3 L341.9 1039.7 L343.7 1038.7 L345.4 996.7 L347.2 1026.2 L349.2 1027.7 L352.7 1056.7 L354.8 1058.7 L357.0 1078.2 L357.8 1076.2 L359.6 1036.3 L361.4 1035.3 L363.2 995.2 L365.0 1023.6 L367.0 1025.1 L370.5 1064.3 L372.6 1066.3 L374.8 1085.3 L375.6 1083.3 L377.4 1037.7 L379.2 1036.7 L380.9 999.5 L382.7 1031.9 L384.7 1033.4 L388.2 1064.2 L390.3 1066.2 L392.5 1087.9 L393.3 1085.9 L395.1 1033.8 L396.9 1032.8 L398.6 994.7 L400.4 1029.7 L402.4 1031.2 L405.9 1059.3 L408.0 1061.3 L410.2 1091.4 L411.0 1089.4 L412.8 1040.2 L414.6 1039.2 L416.4 999.3 L418.2 1023.0 L420.2 1024.5 L423.7 1055.8 L425.8 1057.8 L428.0 1086.8 L428.8 1084.8 L430.6 1039.3 L432.4 1038.3 L434.1 997.6 L435.9 1018.8 L437.9 1020.3 L441.4 1057.7 L443.5 1059.7 L445.7 1079.4 L446.5 1077.4 L448.3 1030.7 L450.1 1029.7 L451.8 993.0 L453.6 1028.0 L455.6 1029.5 L459.1 1056.4 L461.2 1058.4 L463.4 1087.0 L464.2 1085.0 L466.0 1031.4 L467.8 1030.4 L469.5 997.9 L471.3 1021.6 L473.3 1023.1 L476.8 1064.7 L478.9 1066.7 L481.1 1080.9 L481.9 1078.9 L483.7 1034.7 L485.5 1033.7 L487.3 993.2 L489.1 1020.9 L491.1 1022.4 L494.6 1063.5 L496.7 1065.5 L498.9 1082.6 L499.7 1080.6 L501.5 1033.6 L503.3 1032.6 L505.0 996.3 L506.8 1022.6 L508.8 1024.1 L512.3 1060.0 L514.4 1062.0 L516.6 1091.4 L517.4 1089.4 L519.2 1035.8 L521.0 1034.8 L522.7 998.8 L524.5 1029.3 L526.5 1030.8 L530.0 1057.7 L532.1 1059.7 L534.3 1080.7 L535.1 1078.7 L536.9 1038.9 L538.7 1037.9 L540.5 996.3 L542.3 1023.3 L544.3 1024.8 L547.8 1056.1 L549.9 1058.1 L552.1 1078.5 L552.9 1076.5 L554.7 1041.6 L556.5 1040.6 L558.2 996.3 L560.0 1021.4 L562.0 1022.9 L565.5 1056.9 L567.6 1058.9 L569.8 1088.1 L570.6 1086.1 L572.4 1030.8 L574.2 1029.8 L575.9 993.7 L577.7 1030.8 L579.7 1032.3 L583.2 1057.2 L585.3 1059.2 L587.5 1078.2 L588.3 1076.2 L590.1 1033.2 L591.9 1032.2 L593.6 996.1 L595.4 1019.0 L597.4 1020.5 L600.9 1059.0 L603.0 1061.0 L605.2 1090.5 L606.0 1088.5 L607.9 1041.8 L609.6 1040.8 L611.4 991.8 L613.2 1017.3 L615.2 1018.8 L618.7 1065.0 L620.8 1067.0 L623.0 1087.8 L623.8 1085.8 L625.6 1041.6 L627.4 1040.6 L629.1 994.1 L630.9 1032.0 L632.9 1033.5 L636.4 1055.8 L638.5 1057.8 L640.7 1085.6 L641.5 1083.6 L643.3 1038.8 L645.1 1037.8 L646.8 998.8 L648.6 1022.3 L650.6 1023.8 L654.1 1062.5 L656.2 1064.5 L658.4 1090.6 L659.2 1088.6 L661.0 1040.5 L662.8 1039.5 L664.6 996.5 L666.4 1022.7 L668.4 1024.2 L671.9 1061.4 L674.0 1063.4 L676.2 1086.5 L677.0 1084.5 L678.8 1031.0 L680.6 1030.0 L682.3 994.6 L684.1 1028.0 L686.1 1029.5 L689.6 1061.4 L691.7 1063.4 L693.9 1084.2 L694.7 1082.2 L696.5 1040.1 L698.3 1039.1 L700.0 995.3 L701.8 1020.5 L703.8 1022.0 L707.3 1062.7 L709.4 1064.7 L711.6 1085.0 L712.4 1083.0 L714.2 1037.4 L716.0 1036.4 L717.8 996.9 L719.6 1020.0 L721.6 1021.5 L725.1 1056.9 L727.2 1058.9 L729.4 1090.7 L730.2 1088.7 L732.0 1037.9 L733.8 1036.9 L735.5 993.1 L737.3 1023.5 L739.3 1025.0 L742.8 1063.9 L744.9 1065.9 L747.1 1090.8 L747.9 1088.8 L749.7 1040.6 L751.5 1039.6 L753.2 995.5 L755.0 1029.6 L757.0 1031.1 L760.5 1064.3 L762.6 1066.3 L764.8 1088.0 L765.6 1086.0 L767.4 1041.4 L769.2 1040.4 L771.0 993.2 L772.8 1023.2 L774.8 1024.7 L778.2 1061.9 L780.4 1063.9 L782.6 1084.9 L783.4 1082.9 L785.2 1033.8 L787.0 1032.8 L788.7 991.8 L790.5 1030.1 L792.5 1031.6 L796.0 1055.5 L798.1 1057.5 L800.3 1087.9 L801.1 1085.9 L802.9 1036.8 L804.7 1035.8 L806.4 995.1 L808.2 1017.4 L810.2 1018.9 L813.7 1064.1 L815.8 1066.1 L818.0 1081.3 L818.8 1079.3 L820.6 1031.7 L822.4 1030.7 L824.1 996.7 L825.9 1029.1 L827.9 1030.6 L831.4 1065.5 L833.5 1067.5 L835.7 1087.6 L836.5 1085.6 L838.3 1032.4 L840.1 1031.4 L841.9 997.2 L843.7 1019.7 L845.7 1021.2 L849.2 1058.0 L851.3 1060.0 L853.5 1082.8 L854.3 1080.8 L856.1 1038.4 L857.9 1037.4 L859.6 997.8 L861.4 1030.6 L863.4 1032.1 L866.9 1056.0 L869.0 1058.0 L870.0 1073.0" fill="none" stroke="#243e70" stroke-width="2.5" stroke-linejoin="round"/>
<line x1="322" y1="897.8" x2="322" y2="1111.3" stroke="#222" stroke-width="1.3"/>
<line x1="314" y1="1103.3" x2="877" y2="1103.3" stroke="#222" stroke-width="1.3"/>
<path d="M316.2 898.8 L322 889.3 L327.8 898.8Z" fill="#555"/>
<path d="M876.5 1097.5 L886 1103.3 L876.5 1109.1Z" fill="#555"/>
<text x="311.5" y="912.1" text-anchor="end" class="ax">10 G</text>
<text x="291.0" y="966.7" text-anchor="end" class="ax">0</text>
<text x="311.5" y="1021.3" text-anchor="end" class="ax">-10 G</text>
<text x="311.5" y="1075.9" text-anchor="end" class="ax">-20 G</text>
<text x="403.5" y="1124.8" text-anchor="middle" class="ax">Week 06</text>
<text x="527.5" y="1124.8" text-anchor="middle" class="ax">Week 07</text>
<text x="651.5" y="1124.8" text-anchor="middle" class="ax">Week 08</text>
<text x="775.5" y="1124.8" text-anchor="middle" class="ax">Week 09</text>
<text transform="translate(908 883) rotate(90)" class="wm">RRDTOOL / TOBI OETIKER</text>
<text x="258.5" y="1154.7" class="lg" text-anchor="start">Bits/s</text>
<text x="389.4" y="1154.7" class="lg" text-anchor="start">Last</text>
<text x="500.7" y="1154.7" class="lg" text-anchor="start">Avg</text>
<text x="607.5" y="1154.7" class="lg" text-anchor="start">Max</text>
<text x="703.5" y="1154.7" class="lg" text-anchor="start">95th</text>
<text x="283.2" y="1178.7" class="lg" text-anchor="start">In</text>
<text x="283.6" y="1202.7" class="lg" text-anchor="start">Out</text>
<text x="283.3" y="1226.5" class="lg" text-anchor="start">Highest</text>
<text x="432.1" y="1178.7" class="lg" text-anchor="end">8.76G</text>
<text x="544.0" y="1178.7" class="lg" text-anchor="end">7.24G</text>
<text x="656.3" y="1178.7" class="lg" text-anchor="end">10.52G</text>
<text x="767.8" y="1178.7" class="lg" text-anchor="end">9.04G</text>
<text x="432.1" y="1202.7" class="lg" text-anchor="end">18.62G</text>
<text x="544.0" y="1202.7" class="lg" text-anchor="end">14.97G</text>
<text x="656.3" y="1202.7" class="lg" text-anchor="end">25.96G</text>
<text x="767.8" y="1202.7" class="lg" text-anchor="end">22.77G</text>
<text x="767.8" y="1226.5" class="lg" text-anchor="end">22.77G</text>
<text x="259.7" y="1250.6" class="lg" text-anchor="start">Total</text>
<text x="415.3" y="1250.6" class="lg" text-anchor="end">7.43P</text>
<text x="444.0" y="1250.6" class="lg" text-anchor="start">(In</text>
<text x="575.3" y="1250.6" class="lg" text-anchor="end">2.42P</text>
<text x="603.8" y="1250.6" class="lg" text-anchor="start">Out</text>
<text x="734.8" y="1250.6" class="lg" text-anchor="end">5.01P</text>
<text x="734.8" y="1250.6" class="lg" text-anchor="start">)</text>
<line x1="259.5" y1="1179.2" x2="274" y2="1165.7" stroke="#3b783c" stroke-width="2.3"/>
<line x1="259.5" y1="1203.2" x2="274" y2="1189.7" stroke="#243e70" stroke-width="2.3"/>
<line x1="259" y1="1220.8" x2="273" y2="1220.8" stroke="#e8281e" stroke-width="2.3"/>
<path d="M1023.8 931.3 L1023.8 916.8 L1045.3 915.3 L1080.6 914.1 L1085.0 911.5 L1086.7 902.6 L1088.5 911.5 L1092.9 914.6 L1108.8 917.6 L1151.1 919.4 L1186.4 919.4 L1221.7 917.6 L1228.7 917.1 L1239.3 919.4 L1257.0 922.9 L1274.6 920.3 L1300.0 919.4 L1290.0 920.9 L1322.3 916.4 L1325.0 911.9 L1326.8 916.4 L1379.8 915.5 L1433.7 917.3 L1460.6 915.5 L1462.4 911.9 L1464.2 915.5 L1484.0 917.3 L1487.6 921.8 L1505.6 921.8 L1523.5 917.3 L1545.1 914.6 L1569.9 915.5 L1569.9 931.3Z" fill="#e9f3df"/>
<path d="M1023.8 931.3 L1023.8 994.4 L1027.6 997.9 L1032.9 1000.5 L1036.5 996.1 L1052.3 999.7 L1062.9 999.7 L1064.7 1008.5 L1073.5 1012.0 L1080.6 1006.7 L1085.9 1015.5 L1092.9 1005.0 L1095.6 1008.5 L1097.3 1031.4 L1099.1 1075.5 L1100.8 1031.4 L1102.6 1005.0 L1119.4 1005.0 L1126.4 997.9 L1128.2 1095.8 L1131.7 997.9 L1142.3 999.7 L1144.1 1043.8 L1145.8 999.7 L1151.1 997.9 L1168.8 997.9 L1186.4 998.8 L1204.0 999.7 L1219.9 997.9 L1222.6 1003.2 L1225.2 990.8 L1237.6 987.3 L1239.3 964.4 L1257.0 965.3 L1274.6 967.9 L1283.4 970.6 L1292.2 967.0 L1290.0 966.7 L1318.7 969.4 L1322.3 973.0 L1325.9 967.6 L1358.3 968.5 L1372.6 971.2 L1397.8 966.7 L1402.3 971.2 L1405.0 985.6 L1406.8 1043.1 L1408.6 985.6 L1413.9 973.0 L1415.7 967.6 L1431.9 969.4 L1433.7 1060.1 L1435.5 969.4 L1451.7 972.1 L1458.9 973.0 L1460.6 1101.5 L1463.3 973.0 L1476.8 971.2 L1487.6 973.0 L1523.5 971.2 L1541.5 973.0 L1569.9 969.4 L1569.9 931.3Z" fill="#dfe6f2"/>
<path d="M1023.8 931.3 L1023.8 921.2 L1036.5 920.3 L1040.9 918.9 L1061.2 919.4 L1064.7 918.5 L1080.6 917.6 L1087.6 919.9 L1091.1 918.9 L1100.0 919.4 L1105.3 922.0 L1115.8 922.4 L1137.0 922.4 L1144.1 922.0 L1151.1 921.7 L1186.4 922.9 L1204.0 922.9 L1218.1 923.8 L1225.2 921.2 L1235.8 921.7 L1242.8 924.7 L1253.4 925.9 L1269.3 926.5 L1278.1 923.5 L1290.0 923.6 L1308.0 921.8 L1315.1 920.0 L1324.1 918.8 L1330.4 922.7 L1336.7 920.0 L1358.3 918.2 L1378.0 918.8 L1383.4 920.0 L1397.8 920.9 L1405.0 921.8 L1415.7 920.0 L1430.1 920.9 L1442.7 919.1 L1451.7 918.2 L1462.4 918.2 L1480.4 920.0 L1487.6 924.5 L1505.6 924.5 L1518.1 921.8 L1523.5 919.1 L1545.1 917.3 L1548.7 919.1 L1569.9 919.1 L1569.9 931.3Z" fill="#90b86c"/>
<path d="M1023.8 931.3 L1023.8 965.3 L1027.6 967.9 L1031.2 970.6 L1034.7 969.7 L1036.5 967.6 L1040.9 972.3 L1045.3 968.3 L1050.6 971.8 L1061.2 971.4 L1068.2 975.0 L1071.7 978.5 L1077.0 975.0 L1082.3 974.1 L1084.1 977.6 L1091.1 975.0 L1094.7 976.7 L1096.4 980.3 L1098.2 986.4 L1100.0 985.5 L1103.5 974.1 L1108.8 970.6 L1115.8 971.4 L1122.9 974.1 L1130.0 967.9 L1137.0 967.0 L1145.8 966.1 L1154.6 968.8 L1168.8 968.8 L1182.9 970.6 L1193.5 968.8 L1200.5 969.7 L1204.0 970.6 L1219.9 970.6 L1223.4 971.4 L1227.0 966.1 L1232.3 965.3 L1237.6 963.5 L1239.3 952.0 L1244.6 952.0 L1248.1 952.9 L1253.4 950.3 L1257.0 951.1 L1262.2 952.0 L1272.8 951.7 L1274.6 952.9 L1290.0 953.6 L1304.4 952.4 L1315.1 953.6 L1325.9 951.8 L1329.5 951.1 L1336.7 953.3 L1351.1 954.2 L1363.6 951.5 L1374.4 953.3 L1394.2 952.4 L1398.7 949.3 L1403.2 954.2 L1406.8 959.0 L1410.4 957.8 L1417.5 951.8 L1426.5 952.4 L1430.1 953.3 L1448.1 952.4 L1453.5 955.1 L1458.9 957.8 L1461.5 960.4 L1465.1 956.0 L1476.8 956.0 L1489.4 956.9 L1494.8 954.2 L1505.6 954.2 L1523.5 954.7 L1541.5 956.0 L1548.7 957.8 L1555.9 956.0 L1569.9 955.1 L1569.9 931.3Z" fill="#7893c4"/>
<line x1="1022.5" y1="914.5" x2="1575.4" y2="914.5" stroke="#9a9a9a" stroke-width="1" stroke-dasharray="2 2"/>
<line x1="1017.5" y1="914.5" x2="1021.5" y2="914.5" stroke="#555" stroke-width="1"/>
<line x1="1570.9" y1="914.5" x2="1575.4" y2="914.5" stroke="#555" stroke-width="1"/>
<line x1="1022.5" y1="931.5" x2="1575.4" y2="931.5" stroke="#ff8080" stroke-width="1" stroke-dasharray="2 2"/>
<line x1="1017.5" y1="931.5" x2="1021.5" y2="931.5" stroke="#ff8080" stroke-width="1"/>
<line x1="1570.9" y1="931.5" x2="1575.4" y2="931.5" stroke="#ff8080" stroke-width="1"/>
<line x1="1022.5" y1="947.5" x2="1575.4" y2="947.5" stroke="#9a9a9a" stroke-width="1" stroke-dasharray="2 2"/>
<line x1="1017.5" y1="947.5" x2="1021.5" y2="947.5" stroke="#555" stroke-width="1"/>
<line x1="1570.9" y1="947.5" x2="1575.4" y2="947.5" stroke="#555" stroke-width="1"/>
<line x1="1022.5" y1="964.5" x2="1575.4" y2="964.5" stroke="#ff8080" stroke-width="1" stroke-dasharray="2 2"/>
<line x1="1017.5" y1="964.5" x2="1021.5" y2="964.5" stroke="#ff8080" stroke-width="1"/>
<line x1="1570.9" y1="964.5" x2="1575.4" y2="964.5" stroke="#ff8080" stroke-width="1"/>
<line x1="1022.5" y1="980.5" x2="1575.4" y2="980.5" stroke="#9a9a9a" stroke-width="1" stroke-dasharray="2 2"/>
<line x1="1017.5" y1="980.5" x2="1021.5" y2="980.5" stroke="#555" stroke-width="1"/>
<line x1="1570.9" y1="980.5" x2="1575.4" y2="980.5" stroke="#555" stroke-width="1"/>
<line x1="1022.5" y1="997.5" x2="1575.4" y2="997.5" stroke="#ff8080" stroke-width="1" stroke-dasharray="2 2"/>
<line x1="1017.5" y1="997.5" x2="1021.5" y2="997.5" stroke="#ff8080" stroke-width="1"/>
<line x1="1570.9" y1="997.5" x2="1575.4" y2="997.5" stroke="#ff8080" stroke-width="1"/>
<line x1="1022.5" y1="1013.5" x2="1575.4" y2="1013.5" stroke="#9a9a9a" stroke-width="1" stroke-dasharray="2 2"/>
<line x1="1017.5" y1="1013.5" x2="1021.5" y2="1013.5" stroke="#555" stroke-width="1"/>
<line x1="1570.9" y1="1013.5" x2="1575.4" y2="1013.5" stroke="#555" stroke-width="1"/>
<line x1="1022.5" y1="1030.5" x2="1575.4" y2="1030.5" stroke="#ff8080" stroke-width="1" stroke-dasharray="2 2"/>
<line x1="1017.5" y1="1030.5" x2="1021.5" y2="1030.5" stroke="#ff8080" stroke-width="1"/>
<line x1="1570.9" y1="1030.5" x2="1575.4" y2="1030.5" stroke="#ff8080" stroke-width="1"/>
<line x1="1022.5" y1="1046.5" x2="1575.4" y2="1046.5" stroke="#9a9a9a" stroke-width="1" stroke-dasharray="2 2"/>
<line x1="1017.5" y1="1046.5" x2="1021.5" y2="1046.5" stroke="#555" stroke-width="1"/>
<line x1="1570.9" y1="1046.5" x2="1575.4" y2="1046.5" stroke="#555" stroke-width="1"/>
<line x1="1022.5" y1="1063.5" x2="1575.4" y2="1063.5" stroke="#ff8080" stroke-width="1" stroke-dasharray="2 2"/>
<line x1="1017.5" y1="1063.5" x2="1021.5" y2="1063.5" stroke="#ff8080" stroke-width="1"/>
<line x1="1570.9" y1="1063.5" x2="1575.4" y2="1063.5" stroke="#ff8080" stroke-width="1"/>
<line x1="1022.5" y1="1079.5" x2="1575.4" y2="1079.5" stroke="#9a9a9a" stroke-width="1" stroke-dasharray="2 2"/>
<line x1="1017.5" y1="1079.5" x2="1021.5" y2="1079.5" stroke="#555" stroke-width="1"/>
<line x1="1570.9" y1="1079.5" x2="1575.4" y2="1079.5" stroke="#555" stroke-width="1"/>
<line x1="1022.5" y1="1096.5" x2="1575.4" y2="1096.5" stroke="#ff8080" stroke-width="1" stroke-dasharray="2 2"/>
<line x1="1017.5" y1="1096.5" x2="1021.5" y2="1096.5" stroke="#ff8080" stroke-width="1"/>
<line x1="1570.9" y1="1096.5" x2="1575.4" y2="1096.5" stroke="#ff8080" stroke-width="1"/>
<line x1="1039.5" y1="898.8" x2="1039.5" y2="1107.5" stroke="#9a9a9a" stroke-width="1" stroke-dasharray="2 2"/>
<line x1="1039.5" y1="898.8" x2="1039.5" y2="903.8" stroke="#666" stroke-width="1"/>
<line x1="1039.5" y1="1103.5" x2="1039.5" y2="1107.5" stroke="#666" stroke-width="1"/>
<line x1="1060.5" y1="898.8" x2="1060.5" y2="1107.5" stroke="#9a9a9a" stroke-width="1" stroke-dasharray="2 2"/>
<line x1="1060.5" y1="898.8" x2="1060.5" y2="903.8" stroke="#666" stroke-width="1"/>
<line x1="1060.5" y1="1103.5" x2="1060.5" y2="1107.5" stroke="#666" stroke-width="1"/>
<line x1="1081.5" y1="898.8" x2="1081.5" y2="1107.5" stroke="#9a9a9a" stroke-width="1" stroke-dasharray="2 2"/>
<line x1="1081.5" y1="898.8" x2="1081.5" y2="903.8" stroke="#666" stroke-width="1"/>
<line x1="1081.5" y1="1103.5" x2="1081.5" y2="1107.5" stroke="#666" stroke-width="1"/>
<line x1="1102.5" y1="898.8" x2="1102.5" y2="1107.5" stroke="#9a9a9a" stroke-width="1" stroke-dasharray="2 2"/>
<line x1="1102.5" y1="898.8" x2="1102.5" y2="903.8" stroke="#666" stroke-width="1"/>
<line x1="1102.5" y1="1103.5" x2="1102.5" y2="1107.5" stroke="#666" stroke-width="1"/>
<line x1="1124.5" y1="898.8" x2="1124.5" y2="1107.5" stroke="#9a9a9a" stroke-width="1" stroke-dasharray="2 2"/>
<line x1="1124.5" y1="898.8" x2="1124.5" y2="903.8" stroke="#666" stroke-width="1"/>
<line x1="1124.5" y1="1103.5" x2="1124.5" y2="1107.5" stroke="#666" stroke-width="1"/>
<line x1="1145.5" y1="898.8" x2="1145.5" y2="1107.5" stroke="#9a9a9a" stroke-width="1" stroke-dasharray="2 2"/>
<line x1="1145.5" y1="898.8" x2="1145.5" y2="903.8" stroke="#666" stroke-width="1"/>
<line x1="1145.5" y1="1103.5" x2="1145.5" y2="1107.5" stroke="#666" stroke-width="1"/>
<line x1="1166.5" y1="898.8" x2="1166.5" y2="1107.5" stroke="#9a9a9a" stroke-width="1" stroke-dasharray="2 2"/>
<line x1="1166.5" y1="898.8" x2="1166.5" y2="903.8" stroke="#666" stroke-width="1"/>
<line x1="1166.5" y1="1103.5" x2="1166.5" y2="1107.5" stroke="#666" stroke-width="1"/>
<line x1="1187.5" y1="898.8" x2="1187.5" y2="1107.5" stroke="#9a9a9a" stroke-width="1" stroke-dasharray="2 2"/>
<line x1="1187.5" y1="898.8" x2="1187.5" y2="903.8" stroke="#666" stroke-width="1"/>
<line x1="1187.5" y1="1103.5" x2="1187.5" y2="1107.5" stroke="#666" stroke-width="1"/>
<line x1="1208.5" y1="898.8" x2="1208.5" y2="1107.5" stroke="#9a9a9a" stroke-width="1" stroke-dasharray="2 2"/>
<line x1="1208.5" y1="898.8" x2="1208.5" y2="903.8" stroke="#666" stroke-width="1"/>
<line x1="1208.5" y1="1103.5" x2="1208.5" y2="1107.5" stroke="#666" stroke-width="1"/>
<line x1="1229.5" y1="898.8" x2="1229.5" y2="1107.5" stroke="#9a9a9a" stroke-width="1" stroke-dasharray="2 2"/>
<line x1="1229.5" y1="898.8" x2="1229.5" y2="903.8" stroke="#666" stroke-width="1"/>
<line x1="1229.5" y1="1103.5" x2="1229.5" y2="1107.5" stroke="#666" stroke-width="1"/>
<line x1="1250.5" y1="898.8" x2="1250.5" y2="1107.5" stroke="#9a9a9a" stroke-width="1" stroke-dasharray="2 2"/>
<line x1="1250.5" y1="898.8" x2="1250.5" y2="903.8" stroke="#666" stroke-width="1"/>
<line x1="1250.5" y1="1103.5" x2="1250.5" y2="1107.5" stroke="#666" stroke-width="1"/>
<line x1="1271.5" y1="898.8" x2="1271.5" y2="1107.5" stroke="#9a9a9a" stroke-width="1" stroke-dasharray="2 2"/>
<line x1="1271.5" y1="898.8" x2="1271.5" y2="903.8" stroke="#666" stroke-width="1"/>
<line x1="1271.5" y1="1103.5" x2="1271.5" y2="1107.5" stroke="#666" stroke-width="1"/>
<line x1="1293.5" y1="898.8" x2="1293.5" y2="1107.5" stroke="#9a9a9a" stroke-width="1" stroke-dasharray="2 2"/>
<line x1="1293.5" y1="898.8" x2="1293.5" y2="903.8" stroke="#666" stroke-width="1"/>
<line x1="1293.5" y1="1103.5" x2="1293.5" y2="1107.5" stroke="#666" stroke-width="1"/>
<line x1="1314.5" y1="898.8" x2="1314.5" y2="1107.5" stroke="#9a9a9a" stroke-width="1" stroke-dasharray="2 2"/>
<line x1="1314.5" y1="898.8" x2="1314.5" y2="903.8" stroke="#666" stroke-width="1"/>
<line x1="1314.5" y1="1103.5" x2="1314.5" y2="1107.5" stroke="#666" stroke-width="1"/>
<line x1="1335.5" y1="898.8" x2="1335.5" y2="1107.5" stroke="#9a9a9a" stroke-width="1" stroke-dasharray="2 2"/>
<line x1="1335.5" y1="898.8" x2="1335.5" y2="903.8" stroke="#666" stroke-width="1"/>
<line x1="1335.5" y1="1103.5" x2="1335.5" y2="1107.5" stroke="#666" stroke-width="1"/>
<line x1="1356.5" y1="898.8" x2="1356.5" y2="1107.5" stroke="#9a9a9a" stroke-width="1" stroke-dasharray="2 2"/>
<line x1="1356.5" y1="898.8" x2="1356.5" y2="903.8" stroke="#666" stroke-width="1"/>
<line x1="1356.5" y1="1103.5" x2="1356.5" y2="1107.5" stroke="#666" stroke-width="1"/>
<line x1="1377.5" y1="898.8" x2="1377.5" y2="1107.5" stroke="#9a9a9a" stroke-width="1" stroke-dasharray="2 2"/>
<line x1="1377.5" y1="898.8" x2="1377.5" y2="903.8" stroke="#666" stroke-width="1"/>
<line x1="1377.5" y1="1103.5" x2="1377.5" y2="1107.5" stroke="#666" stroke-width="1"/>
<line x1="1398.5" y1="898.8" x2="1398.5" y2="1107.5" stroke="#9a9a9a" stroke-width="1" stroke-dasharray="2 2"/>
<line x1="1398.5" y1="898.8" x2="1398.5" y2="903.8" stroke="#666" stroke-width="1"/>
<line x1="1398.5" y1="1103.5" x2="1398.5" y2="1107.5" stroke="#666" stroke-width="1"/>
<line x1="1419.5" y1="898.8" x2="1419.5" y2="1107.5" stroke="#9a9a9a" stroke-width="1" stroke-dasharray="2 2"/>
<line x1="1419.5" y1="898.8" x2="1419.5" y2="903.8" stroke="#666" stroke-width="1"/>
<line x1="1419.5" y1="1103.5" x2="1419.5" y2="1107.5" stroke="#666" stroke-width="1"/>
<line x1="1440.5" y1="898.8" x2="1440.5" y2="1107.5" stroke="#9a9a9a" stroke-width="1" stroke-dasharray="2 2"/>
<line x1="1440.5" y1="898.8" x2="1440.5" y2="903.8" stroke="#666" stroke-width="1"/>
<line x1="1440.5" y1="1103.5" x2="1440.5" y2="1107.5" stroke="#666" stroke-width="1"/>
<line x1="1462.5" y1="898.8" x2="1462.5" y2="1107.5" stroke="#9a9a9a" stroke-width="1" stroke-dasharray="2 2"/>
<line x1="1462.5" y1="898.8" x2="1462.5" y2="903.8" stroke="#666" stroke-width="1"/>
<line x1="1462.5" y1="1103.5" x2="1462.5" y2="1107.5" stroke="#666" stroke-width="1"/>
<line x1="1483.5" y1="898.8" x2="1483.5" y2="1107.5" stroke="#9a9a9a" stroke-width="1" stroke-dasharray="2 2"/>
<line x1="1483.5" y1="898.8" x2="1483.5" y2="903.8" stroke="#666" stroke-width="1"/>
<line x1="1483.5" y1="1103.5" x2="1483.5" y2="1107.5" stroke="#666" stroke-width="1"/>
<line x1="1504.5" y1="898.8" x2="1504.5" y2="1107.5" stroke="#9a9a9a" stroke-width="1" stroke-dasharray="2 2"/>
<line x1="1504.5" y1="898.8" x2="1504.5" y2="903.8" stroke="#666" stroke-width="1"/>
<line x1="1504.5" y1="1103.5" x2="1504.5" y2="1107.5" stroke="#666" stroke-width="1"/>
<line x1="1525.5" y1="898.8" x2="1525.5" y2="1107.5" stroke="#9a9a9a" stroke-width="1" stroke-dasharray="2 2"/>
<line x1="1525.5" y1="898.8" x2="1525.5" y2="903.8" stroke="#666" stroke-width="1"/>
<line x1="1525.5" y1="1103.5" x2="1525.5" y2="1107.5" stroke="#666" stroke-width="1"/>
<line x1="1546.5" y1="898.8" x2="1546.5" y2="1107.5" stroke="#9a9a9a" stroke-width="1" stroke-dasharray="2 2"/>
<line x1="1546.5" y1="898.8" x2="1546.5" y2="903.8" stroke="#666" stroke-width="1"/>
<line x1="1546.5" y1="1103.5" x2="1546.5" y2="1107.5" stroke="#666" stroke-width="1"/>
<line x1="1567.5" y1="898.8" x2="1567.5" y2="1107.5" stroke="#9a9a9a" stroke-width="1" stroke-dasharray="2 2"/>
<line x1="1567.5" y1="898.8" x2="1567.5" y2="903.8" stroke="#666" stroke-width="1"/>
<line x1="1567.5" y1="1103.5" x2="1567.5" y2="1107.5" stroke="#666" stroke-width="1"/>
<line x1="1062.5" y1="898.8" x2="1062.5" y2="1109.5" stroke="#ff8080" stroke-width="1" stroke-dasharray="2 2"/>
<line x1="1107.5" y1="898.8" x2="1107.5" y2="1109.5" stroke="#ff8080" stroke-width="1" stroke-dasharray="2 2"/>
<line x1="1155.5" y1="898.8" x2="1155.5" y2="1109.5" stroke="#ff8080" stroke-width="1" stroke-dasharray="2 2"/>
<line x1="1199.5" y1="898.8" x2="1199.5" y2="1109.5" stroke="#ff8080" stroke-width="1" stroke-dasharray="2 2"/>
<line x1="1247.5" y1="898.8" x2="1247.5" y2="1109.5" stroke="#ff8080" stroke-width="1" stroke-dasharray="2 2"/>
<line x1="1293.5" y1="898.8" x2="1293.5" y2="1109.5" stroke="#ff8080" stroke-width="1" stroke-dasharray="2 2"/>
<line x1="1338.5" y1="898.8" x2="1338.5" y2="1109.5" stroke="#ff8080" stroke-width="1" stroke-dasharray="2 2"/>
<line x1="1385.5" y1="898.8" x2="1385.5" y2="1109.5" stroke="#ff8080" stroke-width="1" stroke-dasharray="2 2"/>
<line x1="1431.5" y1="898.8" x2="1431.5" y2="1109.5" stroke="#ff8080" stroke-width="1" stroke-dasharray="2 2"/>
<line x1="1477.5" y1="898.8" x2="1477.5" y2="1109.5" stroke="#ff8080" stroke-width="1" stroke-dasharray="2 2"/>
<line x1="1523.5" y1="898.8" x2="1523.5" y2="1109.5" stroke="#ff8080" stroke-width="1" stroke-dasharray="2 2"/>
<line x1="1565.5" y1="898.8" x2="1565.5" y2="1109.5" stroke="#ff8080" stroke-width="1" stroke-dasharray="2 2"/>
<path d="M1023.8 921.2 L1036.5 920.3 L1040.9 918.9 L1061.2 919.4 L1064.7 918.5 L1080.6 917.6 L1087.6 919.9 L1091.1 918.9 L1100.0 919.4 L1105.3 922.0 L1115.8 922.4 L1137.0 922.4 L1144.1 922.0 L1151.1 921.7 L1186.4 922.9 L1204.0 922.9 L1218.1 923.8 L1225.2 921.2 L1235.8 921.7 L1242.8 924.7 L1253.4 925.9 L1269.3 926.5 L1278.1 923.5 L1290.0 923.6 L1308.0 921.8 L1315.1 920.0 L1324.1 918.8 L1330.4 922.7 L1336.7 920.0 L1358.3 918.2 L1378.0 918.8 L1383.4 920.0 L1397.8 920.9 L1405.0 921.8 L1415.7 920.0 L1430.1 920.9 L1442.7 919.1 L1451.7 918.2 L1462.4 918.2 L1480.4 920.0 L1487.6 924.5 L1505.6 924.5 L1518.1 921.8 L1523.5 919.1 L1545.1 917.3 L1548.7 919.1 L1569.9 919.1" fill="none" stroke="#3b783c" stroke-width="2.3" stroke-linejoin="round"/>
<path d="M1023.8 965.3 L1027.6 967.9 L1031.2 970.6 L1034.7 969.7 L1036.5 967.6 L1040.9 972.3 L1045.3 968.3 L1050.6 971.8 L1061.2 971.4 L1068.2 975.0 L1071.7 978.5 L1077.0 975.0 L1082.3 974.1 L1084.1 977.6 L1091.1 975.0 L1094.7 976.7 L1096.4 980.3 L1098.2 986.4 L1100.0 985.5 L1103.5 974.1 L1108.8 970.6 L1115.8 971.4 L1122.9 974.1 L1130.0 967.9 L1137.0 967.0 L1145.8 966.1 L1154.6 968.8 L1168.8 968.8 L1182.9 970.6 L1193.5 968.8 L1200.5 969.7 L1204.0 970.6 L1219.9 970.6 L1223.4 971.4 L1227.0 966.1 L1232.3 965.3 L1237.6 963.5 L1239.3 952.0 L1244.6 952.0 L1248.1 952.9 L1253.4 950.3 L1257.0 951.1 L1262.2 952.0 L1272.8 951.7 L1274.6 952.9 L1290.0 953.6 L1304.4 952.4 L1315.1 953.6 L1325.9 951.8 L1329.5 951.1 L1336.7 953.3 L1351.1 954.2 L1363.6 951.5 L1374.4 953.3 L1394.2 952.4 L1398.7 949.3 L1403.2 954.2 L1406.8 959.0 L1410.4 957.8 L1417.5 951.8 L1426.5 952.4 L1430.1 953.3 L1448.1 952.4 L1453.5 955.1 L1458.9 957.8 L1461.5 960.4 L1465.1 956.0 L1476.8 956.0 L1489.4 956.9 L1494.8 954.2 L1505.6 954.2 L1523.5 954.7 L1541.5 956.0 L1548.7 957.8 L1555.9 956.0 L1569.9 955.1" fill="none" stroke="#243e70" stroke-width="2.5" stroke-linejoin="round"/>
<line x1="1021.5" y1="897.8" x2="1021.5" y2="1111.5" stroke="#222" stroke-width="1.3"/>
<line x1="1013.5" y1="1103.5" x2="1576.9" y2="1103.5" stroke="#222" stroke-width="1.3"/>
<path d="M1015.7 898.8 L1021.5 889.3 L1027.3 898.8Z" fill="#555"/>
<path d="M1576.4 1097.7 L1585.9 1103.5 L1576.4 1109.3Z" fill="#555"/>
<text x="990.5" y="936.8" text-anchor="end" class="ax">0</text>
<text x="1011.0" y="969.8" text-anchor="end" class="ax">-20 G</text>
<text x="1011.0" y="1002.8" text-anchor="end" class="ax">-40 G</text>
<text x="1011.0" y="1035.8" text-anchor="end" class="ax">-60 G</text>
<text x="1011.0" y="1068.8" text-anchor="end" class="ax">-80 G</text>
<text x="1011.0" y="1101.8" text-anchor="end" class="ax">-100 G</text>
<text x="1086.0" y="1125.0" text-anchor="middle" class="ax">Apr 2024</text>
<text x="1223.5" y="1125.0" text-anchor="middle" class="ax">Jul 2024</text>
<text x="1361.8" y="1125.0" text-anchor="middle" class="ax">Oct 2024</text>
<text x="1500.0" y="1125.0" text-anchor="middle" class="ax">Jan 2025</text>
<text transform="translate(1608.2 883) rotate(90)" class="wm">RRDTOOL / TOBI OETIKER</text>
<text x="958.7" y="1154.7" class="lg" text-anchor="start">Bits/s</text>
<text x="1089.6" y="1154.7" class="lg" text-anchor="start">Last</text>
<text x="1200.9" y="1154.7" class="lg" text-anchor="start">Avg</text>
<text x="1307.7" y="1154.7" class="lg" text-anchor="start">Max</text>
<text x="1403.7" y="1154.7" class="lg" text-anchor="start">95th</text>
<text x="983.4" y="1178.7" class="lg" text-anchor="start">In</text>
<text x="983.8" y="1202.7" class="lg" text-anchor="start">Out</text>
<text x="983.5" y="1226.5" class="lg" text-anchor="start">Highest</text>
<text x="1132.3" y="1178.7" class="lg" text-anchor="end">7.18G</text>
<text x="1244.2" y="1178.7" class="lg" text-anchor="end">5.88G</text>
<text x="1356.5" y="1178.7" class="lg" text-anchor="end">17.13G</text>
<text x="1468.0" y="1178.7" class="lg" text-anchor="end">7.54G</text>
<text x="1132.3" y="1202.7" class="lg" text-anchor="end">14.82G</text>
<text x="1244.2" y="1202.7" class="lg" text-anchor="end">17.79G</text>
<text x="1356.5" y="1202.7" class="lg" text-anchor="end">104.64G</text>
<text x="1468.0" y="1202.7" class="lg" text-anchor="end">26.08G</text>
<text x="1468.0" y="1226.5" class="lg" text-anchor="end">26.08G</text>
<text x="959.9" y="1250.6" class="lg" text-anchor="start">Total</text>
<text x="1115.5" y="1250.6" class="lg" text-anchor="end">93.06P</text>
<text x="1144.2" y="1250.6" class="lg" text-anchor="start">(In</text>
<text x="1275.5" y="1250.6" class="lg" text-anchor="end">23.11P</text>
<text x="1304.0" y="1250.6" class="lg" text-anchor="start">Out</text>
<text x="1435.0" y="1250.6" class="lg" text-anchor="end">69.95P</text>
<text x="1435.0" y="1250.6" class="lg" text-anchor="start">)</text>
<line x1="959.7" y1="1179.2" x2="974.2" y2="1165.7" stroke="#3b783c" stroke-width="2.3"/>
<line x1="959.7" y1="1203.2" x2="974.2" y2="1189.7" stroke="#243e70" stroke-width="2.3"/>
<line x1="959.2" y1="1220.8" x2="973.2" y2="1220.8" stroke="#e8281e" stroke-width="2.3"/></svg>
<div class="r" style="left:92.0px;top:80.0px;width:161.0px;height:5.0px;background:#e2e5e5;"></div>
<div class="r" style="left:253.0px;top:80.0px;width:23.0px;height:5.0px;background:#ececec;"></div>
<div class="r" style="left:92.0px;top:85.0px;width:23.0px;height:21.0px;background:#c7c7c7;"></div>
<div class="r" style="left:115.0px;top:85.0px;width:23.0px;height:21.0px;background:#cbcbcb;"></div>
<div class="r" style="left:138.0px;top:85.0px;width:23.0px;height:21.0px;background:#c6c6c6;"></div>
<div class="r" style="left:161.0px;top:85.0px;width:23.0px;height:21.0px;background:#d5d5d5;"></div>
<div class="r" style="left:184.0px;top:85.0px;width:23.0px;height:21.0px;background:#d5d5d5;"></div>
<div class="r" style="left:207.0px;top:85.0px;width:23.0px;height:21.0px;background:#d1d1d1;"></div>
<div class="r" style="left:230.0px;top:85.0px;width:23.0px;height:21.0px;background:#d8d8d8;"></div>
<div class="r" style="left:253.0px;top:85.0px;width:23.0px;height:21.0px;background:#d6d6d6;"></div>
<div class="r" style="left:276.0px;top:85.0px;width:23.0px;height:21.0px;background:#cacaca;"></div>
<div class="r" style="left:299.0px;top:85.0px;width:23.0px;height:21.0px;background:#c6c6c6;"></div>
<div class="r" style="left:322.0px;top:85.0px;width:23.0px;height:21.0px;background:#cbcbcb;"></div>
<div class="r" style="left:345.0px;top:85.0px;width:23.0px;height:21.0px;background:#d6d6d6;"></div>
<div class="r" style="left:368.0px;top:85.0px;width:23.0px;height:21.0px;background:#c5c5c5;"></div>
<div class="r" style="left:391.0px;top:85.0px;width:23.0px;height:21.0px;background:#d3d3d3;"></div>
<div class="r" style="left:414.0px;top:85.0px;width:23.0px;height:21.0px;background:#d3d3d3;"></div>
<div class="r" style="left:437.0px;top:85.0px;width:23.0px;height:21.0px;background:#d2d2d2;"></div>
<div class="r" style="left:460.0px;top:85.0px;width:23.0px;height:21.0px;background:#d0d0d0;"></div>
<div class="r" style="left:483.0px;top:85.0px;width:23.0px;height:21.0px;background:#cecece;"></div>
<div class="r" style="left:506.0px;top:85.0px;width:23.0px;height:21.0px;background:#e0e0e0;"></div>
<div class="r" style="left:529.0px;top:85.0px;width:23.0px;height:21.0px;background:#d2d2d2;"></div>
<div class="r" style="left:552.0px;top:85.0px;width:23.0px;height:21.0px;background:#c8c8c8;"></div>
<div class="r" style="left:575.0px;top:85.0px;width:23.0px;height:21.0px;background:#d1d1d1;"></div>
<div class="r" style="left:598.0px;top:85.0px;width:23.0px;height:21.0px;background:#c6c6c6;"></div>
<div class="r" style="left:621.0px;top:85.0px;width:23.0px;height:21.0px;background:#cdcdcd;"></div>
<div class="r" style="left:644.0px;top:85.0px;width:23.0px;height:21.0px;background:#dadada;"></div>
<div class="r" style="left:667.0px;top:85.0px;width:4.0px;height:21.0px;background:#ececec;"></div>
<div class="r" style="left:399.0px;top:171.0px;width:84.0px;height:6.0px;background:#f6f8fa;"></div>
<div class="r" style="left:399.0px;top:177.0px;width:15.0px;height:22.6px;background:#c4d3e0;"></div>
<div class="r" style="left:414.0px;top:177.0px;width:23.0px;height:22.6px;background:#9cb4c9;"></div>
<div class="r" style="left:437.0px;top:177.0px;width:23.0px;height:22.6px;background:#aec4d4;"></div>
<div class="r" style="left:460.0px;top:177.0px;width:23.0px;height:22.6px;background:#92adc6;"></div>
<div class="r" style="left:483.0px;top:177.0px;width:23.0px;height:22.6px;background:#c6d4e0;"></div>
<div class="r" style="left:506.0px;top:177.0px;width:23.0px;height:22.6px;background:#a2b7cc;"></div>
<div class="r" style="left:529.0px;top:177.0px;width:23.0px;height:22.6px;background:#b9cad8;"></div>
<div class="r" style="left:552.0px;top:177.0px;width:23.0px;height:22.6px;background:#93aec4;"></div>
<div class="r" style="left:575.0px;top:177.0px;width:23.0px;height:22.6px;background:#a8bccf;"></div>
<div class="r" style="left:598.0px;top:177.0px;width:23.0px;height:22.6px;background:#a9bcd0;"></div>
<div class="r" style="left:621.0px;top:177.0px;width:23.0px;height:22.6px;background:#bccbd9;"></div>
<div class="r" style="left:644.0px;top:177.0px;width:23.0px;height:22.6px;background:#a5bbcd;"></div>
<div class="r" style="left:667.0px;top:177.0px;width:23.0px;height:22.6px;background:#bccdda;"></div>
<div class="r" style="left:370.0px;top:212.0px;width:44.0px;height:11.0px;background:#fbfbfb;"></div>
<div class="r" style="left:483.0px;top:212.0px;width:92.0px;height:11.0px;background:#fbfbfc;"></div>
<div class="r" style="left:370.0px;top:223.0px;width:21.0px;height:22.6px;background:#f3f3f3;"></div>
<div class="r" style="left:391.0px;top:223.0px;width:23.0px;height:22.6px;background:#cdcdcd;"></div>
<div class="r" style="left:414.0px;top:223.0px;width:23.0px;height:22.6px;background:#cbcbcb;"></div>
<div class="r" style="left:437.0px;top:223.0px;width:23.0px;height:22.6px;background:#cfcfcf;"></div>
<div class="r" style="left:460.0px;top:223.0px;width:23.0px;height:22.6px;background:#cdcdcd;"></div>
<div class="r" style="left:483.0px;top:223.0px;width:23.0px;height:22.6px;background:#d6d6d6;"></div>
<div class="r" style="left:506.0px;top:223.0px;width:23.0px;height:22.6px;background:#c9c9c9;"></div>
<div class="r" style="left:529.0px;top:223.0px;width:23.0px;height:22.6px;background:#c0c0c0;"></div>
<div class="r" style="left:552.0px;top:223.0px;width:23.0px;height:22.6px;background:#d0d0d0;"></div>
<div class="r" style="left:575.0px;top:223.0px;width:23.0px;height:22.6px;background:#c5c5c5;"></div>
<div class="r" style="left:598.0px;top:223.0px;width:23.0px;height:22.6px;background:#cfcfcf;"></div>
<div class="r" style="left:621.0px;top:223.0px;width:23.0px;height:22.6px;background:#e2e2e2;"></div>
<div class="r" style="left:644.0px;top:223.0px;width:23.0px;height:22.6px;background:#d8d8d8;"></div>
<div class="r" style="left:667.0px;top:223.0px;width:23.0px;height:22.6px;background:#dfdfdf;"></div>
<div class="r" style="left:690.0px;top:223.0px;width:23.0px;height:22.6px;background:#d4d4d4;"></div>
<div class="r" style="left:713.0px;top:223.0px;width:23.0px;height:22.6px;background:#c9c9c9;"></div>
<div class="r" style="left:736.0px;top:223.0px;width:23.0px;height:22.6px;background:#d4d4d4;"></div>
<div class="r" style="left:370.0px;top:245.6px;width:21.0px;height:23.4px;background:#f9f9f9;"></div>
<div class="r" style="left:391.0px;top:245.6px;width:23.0px;height:23.4px;background:#ececec;"></div>
<div class="r" style="left:414.0px;top:245.6px;width:23.0px;height:23.4px;background:#efefef;"></div>
<div class="r" style="left:437.0px;top:245.6px;width:46.0px;height:23.4px;background:#f2f2f2;"></div>
<div class="r" style="left:370.0px;top:269.0px;width:21.0px;height:22.6px;background:#fafafa;"></div>
<div class="r" style="left:391.0px;top:269.0px;width:23.0px;height:22.6px;background:#e6e6e6;"></div>
<div class="r" style="left:414.0px;top:269.0px;width:23.0px;height:22.6px;background:#e8e8e8;"></div>
<div class="r" style="left:437.0px;top:269.0px;width:23.0px;height:22.6px;background:#e0e0e0;"></div>
<div class="r" style="left:460.0px;top:269.0px;width:23.0px;height:22.6px;background:#f3f3f3;"></div>
<div class="r" style="left:370.0px;top:291.6px;width:400.0px;height:13.1px;background:#f0f0f0;"></div>
<div class="r" style="left:1221.0px;top:177.0px;width:21.0px;height:22.7px;background:#cdcdcd;"></div>
<div class="r" style="left:1242.0px;top:177.0px;width:23.0px;height:22.7px;background:#d3d3d3;"></div>
<div class="r" style="left:1265.0px;top:177.0px;width:23.0px;height:22.7px;background:#bababa;"></div>
<div class="r" style="left:1288.0px;top:177.0px;width:23.0px;height:22.7px;background:#d4d4d4;"></div>
<div class="r" style="left:1311.0px;top:177.0px;width:23.0px;height:22.7px;background:#cbcbcb;"></div>
<div class="r" style="left:1334.0px;top:177.0px;width:23.0px;height:22.7px;background:#bebebe;"></div>
<div class="r" style="left:1357.0px;top:177.0px;width:23.0px;height:22.7px;background:#c7c7c7;"></div>
<div class="r" style="left:1380.0px;top:177.0px;width:23.0px;height:22.7px;background:#cccccc;"></div>
<div class="r" style="left:1403.0px;top:177.0px;width:23.0px;height:22.7px;background:#e0e0e0;"></div>
<div class="r" style="left:1426.0px;top:177.0px;width:23.0px;height:22.7px;background:#c3c3c3;"></div>
<div class="r" style="left:1449.0px;top:177.0px;width:26.0px;height:22.7px;background:#fcfcfc;"></div>
<div class="r" style="left:276.0px;top:373.0px;width:23.0px;height:11.0px;background:#efefef;"></div>
<div class="r" style="left:299.0px;top:373.0px;width:23.0px;height:11.0px;background:#fbfbfb;"></div>
<div class="r" style="left:322.0px;top:373.0px;width:23.0px;height:11.0px;background:#ededed;"></div>
<div class="r" style="left:345.0px;top:373.0px;width:23.0px;height:11.0px;background:#fdfdfd;"></div>
<div class="r" style="left:368.0px;top:373.0px;width:23.0px;height:11.0px;background:#fdfdfd;"></div>
<div class="r" style="left:391.0px;top:373.0px;width:23.0px;height:11.0px;background:#eaeaea;"></div>
<div class="r" style="left:414.0px;top:373.0px;width:23.0px;height:11.0px;background:#efefef;"></div>
<div class="r" style="left:437.0px;top:373.0px;width:23.0px;height:11.0px;background:#f6f6f6;"></div>
<div class="r" style="left:460.0px;top:373.0px;width:23.0px;height:11.0px;background:#f6f6f6;"></div>
<div class="r" style="left:483.0px;top:373.0px;width:23.0px;height:11.0px;background:#fcfcfc;"></div>
<div class="r" style="left:506.0px;top:373.0px;width:23.0px;height:11.0px;background:#f3f3f3;"></div>
<div class="r" style="left:529.0px;top:373.0px;width:23.0px;height:11.0px;background:#f2f2f2;"></div>
<div class="r" style="left:552.0px;top:373.0px;width:23.0px;height:11.0px;background:#fcfcfc;"></div>
<div class="r" style="left:575.0px;top:373.0px;width:23.0px;height:11.0px;background:#f7f7f7;"></div>
<div class="r" style="left:598.0px;top:373.0px;width:23.0px;height:11.0px;background:#f7f7f7;"></div>
<div class="r" style="left:621.0px;top:373.0px;width:23.0px;height:11.0px;background:#eaeaea;"></div>
<div class="r" style="left:644.0px;top:373.0px;width:23.0px;height:11.0px;background:#f3f3f3;"></div>
<div class="r" style="left:667.0px;top:373.0px;width:23.0px;height:11.0px;background:#fbfbfb;"></div>
<div class="r" style="left:276.0px;top:384.0px;width:23.0px;height:22.6px;background:#d8d8d8;"></div>
<div class="r" style="left:299.0px;top:384.0px;width:23.0px;height:22.6px;background:#dbdbdb;"></div>
<div class="r" style="left:322.0px;top:384.0px;width:23.0px;height:22.6px;background:#d9d9d9;"></div>
<div class="r" style="left:345.0px;top:384.0px;width:23.0px;height:22.6px;background:#e2e2e2;"></div>
<div class="r" style="left:368.0px;top:384.0px;width:23.0px;height:22.6px;background:#dadada;"></div>
<div class="r" style="left:391.0px;top:384.0px;width:23.0px;height:22.6px;background:#ececec;"></div>
<div class="r" style="left:414.0px;top:384.0px;width:23.0px;height:22.6px;background:#dadada;"></div>
<div class="r" style="left:437.0px;top:384.0px;width:23.0px;height:22.6px;background:#e6e6e6;"></div>
<div class="r" style="left:460.0px;top:384.0px;width:23.0px;height:22.6px;background:#e7e7e7;"></div>
<div class="r" style="left:483.0px;top:384.0px;width:23.0px;height:22.6px;background:#dfdfdf;"></div>
<div class="r" style="left:506.0px;top:384.0px;width:23.0px;height:22.6px;background:#dfdfdf;"></div>
<div class="r" style="left:529.0px;top:384.0px;width:23.0px;height:22.6px;background:#e0e0e0;"></div>
<div class="r" style="left:552.0px;top:384.0px;width:23.0px;height:22.6px;background:#d9d9d9;"></div>
<div class="r" style="left:575.0px;top:384.0px;width:23.0px;height:22.6px;background:#e7e7e7;"></div>
<div class="r" style="left:598.0px;top:384.0px;width:23.0px;height:22.6px;background:#e3e3e3;"></div>
<div class="r" style="left:621.0px;top:384.0px;width:23.0px;height:22.6px;background:#dfdfdf;"></div>
<div class="r" style="left:644.0px;top:384.0px;width:23.0px;height:22.6px;background:#e4e4e4;"></div>
<div class="r" style="left:667.0px;top:384.0px;width:23.0px;height:22.6px;background:#d4d4d4;"></div>
<div class="r" style="left:276.0px;top:406.6px;width:23.0px;height:23.0px;background:#dddddd;"></div>
<div class="r" style="left:299.0px;top:406.6px;width:23.0px;height:23.0px;background:#e5e5e5;"></div>
<div class="r" style="left:322.0px;top:406.6px;width:23.0px;height:23.0px;background:#f4f4f4;"></div>
<div class="r" style="left:345.0px;top:406.6px;width:23.0px;height:23.0px;background:#eeeeee;"></div>
<div class="r" style="left:368.0px;top:406.6px;width:23.0px;height:23.0px;background:#e8e8e8;"></div>
<div class="r" style="left:391.0px;top:406.6px;width:23.0px;height:23.0px;background:#e5e5e5;"></div>
<div class="r" style="left:414.0px;top:406.6px;width:23.0px;height:23.0px;background:#dcdcdc;"></div>
<div class="r" style="left:437.0px;top:406.6px;width:23.0px;height:23.0px;background:#d8d8d8;"></div>
<div class="r" style="left:460.0px;top:406.6px;width:23.0px;height:23.0px;background:#e4e4e4;"></div>
<div class="r" style="left:483.0px;top:406.6px;width:23.0px;height:23.0px;background:#ececec;"></div>
<div class="r" style="left:276.0px;top:429.6px;width:23.0px;height:11.4px;background:#f0f0f0;"></div>
<div class="r" style="left:299.0px;top:429.6px;width:23.0px;height:11.4px;background:#e5e5e5;"></div>
<div class="r" style="left:322.0px;top:429.6px;width:23.0px;height:11.4px;background:#f1f1f1;"></div>
<div class="r" style="left:345.0px;top:429.6px;width:23.0px;height:11.4px;background:#f7f7f7;"></div>
<div class="r" style="left:368.0px;top:429.6px;width:23.0px;height:11.4px;background:#f0f0f0;"></div>
<div class="r" style="left:391.0px;top:429.6px;width:23.0px;height:11.4px;background:#f3f3f3;"></div>
<div class="r" style="left:414.0px;top:429.6px;width:23.0px;height:11.4px;background:#f2f2f2;"></div>
<div class="r" style="left:437.0px;top:429.6px;width:23.0px;height:11.4px;background:#f2f2f2;"></div>
<div class="r" style="left:460.0px;top:429.6px;width:23.0px;height:11.4px;background:#f0f0f0;"></div>
<div class="r" style="left:483.0px;top:429.6px;width:23.0px;height:11.4px;background:#f9f9f9;"></div>
<div class="r" style="left:1006.0px;top:372.2px;width:6.0px;height:11.6px;background:#efefef;"></div>
<div class="r" style="left:1012.0px;top:372.2px;width:23.0px;height:11.6px;background:#f1f1f1;"></div>
<div class="r" style="left:1035.0px;top:372.2px;width:23.0px;height:11.6px;background:#efefef;"></div>
<div class="r" style="left:1058.0px;top:372.2px;width:23.0px;height:11.6px;background:#efefef;"></div>
<div class="r" style="left:1081.0px;top:372.2px;width:23.0px;height:11.6px;background:#ebebeb;"></div>
<div class="r" style="left:1104.0px;top:372.2px;width:23.0px;height:11.6px;background:#f3f3f3;"></div>
<div class="r" style="left:1127.0px;top:372.2px;width:23.0px;height:11.6px;background:#f4f4f4;"></div>
<div class="r" style="left:1150.0px;top:372.2px;width:23.0px;height:11.6px;background:#fafafa;"></div>
<div class="r" style="left:1006.0px;top:383.8px;width:6.0px;height:23.1px;background:#e6e6e6;"></div>
<div class="r" style="left:1012.0px;top:383.8px;width:23.0px;height:23.1px;background:#e0e0e0;"></div>
<div class="r" style="left:1035.0px;top:383.8px;width:23.0px;height:23.1px;background:#f2f2f2;"></div>
<div class="r" style="left:1058.0px;top:383.8px;width:23.0px;height:23.1px;background:#e2e2e2;"></div>
<div class="r" style="left:1081.0px;top:383.8px;width:23.0px;height:23.1px;background:#e2e2e2;"></div>
<div class="r" style="left:1104.0px;top:383.8px;width:23.0px;height:23.1px;background:#e5e5e5;"></div>
<div class="r" style="left:1127.0px;top:383.8px;width:23.0px;height:23.1px;background:#e4e4e4;"></div>
<div class="r" style="left:1150.0px;top:383.8px;width:23.0px;height:23.1px;background:#dcdcdc;"></div></body></html>
